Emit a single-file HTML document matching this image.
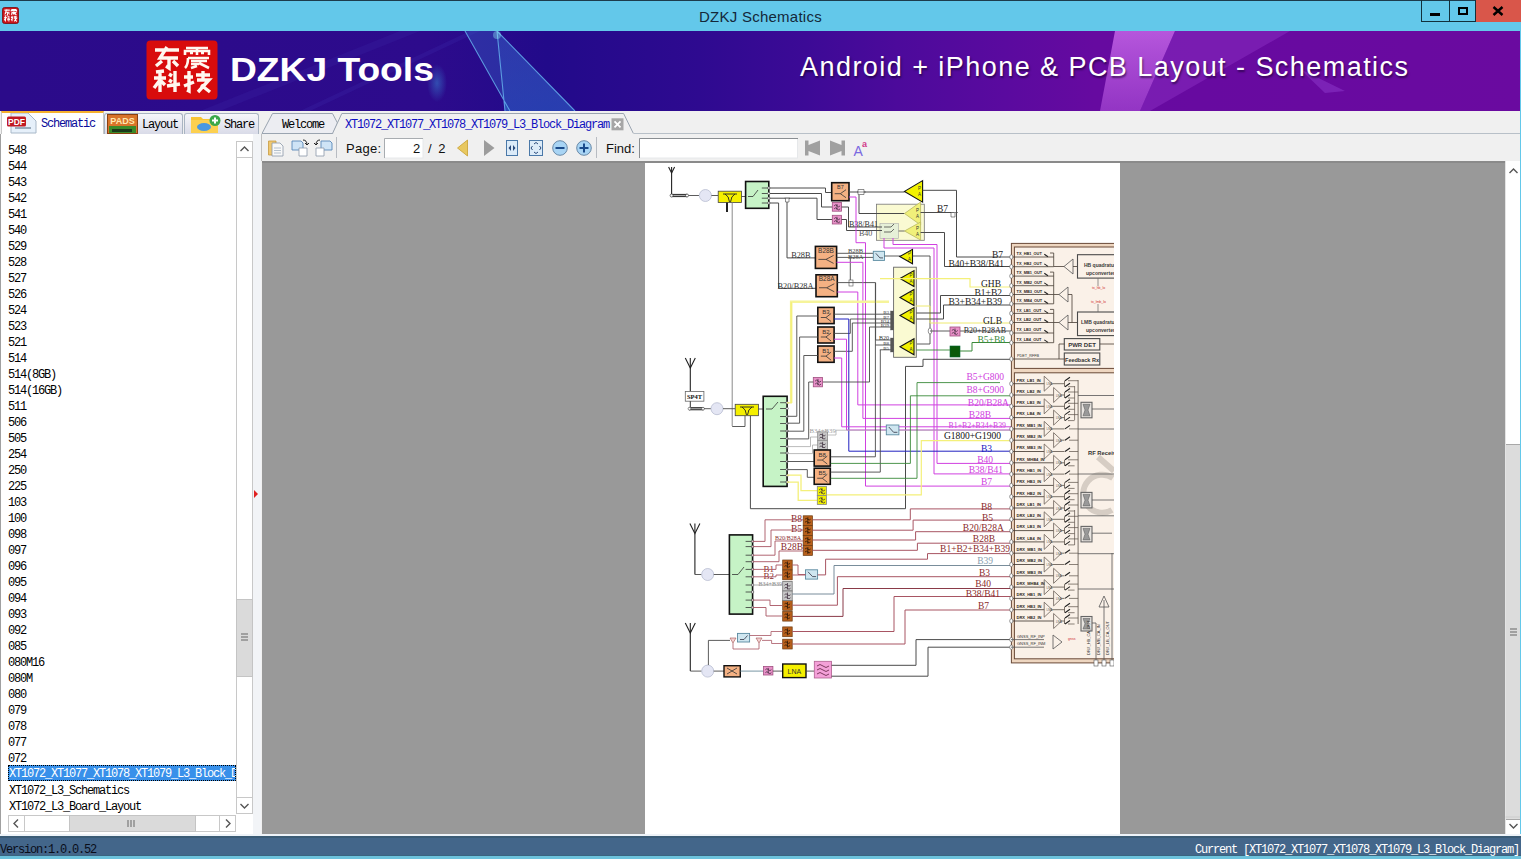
<!DOCTYPE html>
<html><head><meta charset="utf-8">
<style>
*{margin:0;padding:0;box-sizing:border-box}
html,body{width:1521px;height:859px;overflow:hidden;background:#f0f0f0;position:relative;font-family:"Liberation Sans",sans-serif}
.a{position:absolute}
.sm{font-family:"Liberation Mono",monospace;font-size:12px;letter-spacing:-1.2px;white-space:pre;line-height:16px}
#title{left:0;top:0;width:1521px;height:31px;background:#63c8ea;border-top:1px solid #1d3c4c}
#banner{left:0;top:31px;width:1520px;height:80px;background:linear-gradient(90deg,#2b0b8a 0%,#2d0b8c 28%,#220a8a 36%,#2e0a90 46%,#3c0a96 53%,#4c0a9b 59%,#5a0a9f 66%,#660aa0 72%,#6a0aa0 100%);overflow:hidden}
.li{left:8px;height:16px;color:#000}
.sel{left:8px;width:228px;height:16px;margin-top:-2px;padding-top:2px;padding-left:1px;line-height:14px;background:#3890ea;color:#fff;outline:1px dotted #000;outline-offset:-1px;overflow:hidden}
.tab{position:absolute;top:113px;height:21px;border:1px solid #a9b4c2;border-bottom:none;border-radius:3px 3px 0 0;background:linear-gradient(#f6f6fa,#d9dbe8)}
.sb{position:absolute;background:#fff;border:1px solid #c8c8c8}
</style></head><body>
<!-- title bar -->
<div id="title" class="a">
  <svg class="a" style="left:2px;top:6px" width="17" height="17" viewBox="0 0 17 17"><rect x="0.5" y="0.5" width="16" height="16" rx="2" fill="#c8141a" stroke="#7a0a0a" stroke-width="0.8"/><g transform="translate(0.5,0.5) scale(0.225,0.271) translate(-146.5,-9.5)" stroke="#fff" stroke-width="4.2" fill="none"><g transform="translate(154,16)"><path d="M1,3 H25 M13,0 L6,11 H24 M15,11 V21 L12,19 M8,14 L2,19 M19,14 L24,19"/></g><g transform="translate(184,16)"><path d="M2,1 H24 M1,8 V4 H25 V8 M13,1 V8 M4,11 H25 M4,11 Q4,18 1,21 M7,14 H23 M7,17 H15 M15,16 L25,21"/></g><g transform="translate(154,40)"><path d="M2,1 L10,0 M0,7 H12 M6,1 V21 M6,9 L0,17 M15,3 L18,5 M15,9 L18,11 M13,15 L26,13 M21,0 V21"/></g><g transform="translate(184,40)"><path d="M0,6 H9 M5,0 V20 M0,15 L10,11 M12,4 H26 M19,0 V9 M13,9 H25 L14,21 M17,14 L26,21"/></g></g></svg>
  <div class="a" style="left:699px;top:7px;font-size:15px;letter-spacing:0.25px;color:#14283a">DZKJ Schematics</div>
  <div class="a" style="left:1421px;top:-1px;width:29px;height:22px;border:1px solid #12303c;border-top:none"></div>
  <div class="a" style="left:1430px;top:12px;width:10px;height:3px;background:#000"></div>
  <div class="a" style="left:1449px;top:-1px;width:27px;height:22px;border:1px solid #12303c;border-top:none;border-left:none"></div>
  <div class="a" style="left:1458px;top:6px;width:10px;height:8px;border:2px solid #000"></div>
  <div class="a" style="left:1476px;top:-1px;width:45px;height:22px;background:#d9564a"></div>
  <svg class="a" style="left:1492px;top:5px" width="12" height="10" viewBox="0 0 12 10"><path d="M1.5,1 L10.5,9 M10.5,1 L1.5,9" stroke="#000" stroke-width="2.4"/></svg>
</div>
<!-- banner -->
<div id="banner" class="a">
  <svg class="a" style="left:0;top:0" width="1520" height="80" viewBox="0 0 1520 80">
    <defs>
      <linearGradient id="st1" x1="0" y1="0" x2="0" y2="1"><stop offset="0" stop-color="#3a78d8" stop-opacity=".55"/><stop offset="1" stop-color="#2c60c8" stop-opacity=".8"/></linearGradient>
      <linearGradient id="st2" x1="0" y1="0" x2="0" y2="1"><stop offset="0" stop-color="#d070f0" stop-opacity=".75"/><stop offset="1" stop-color="#c060e8" stop-opacity=".5"/></linearGradient>
      <radialGradient id="gl" cx=".5" cy=".5" r=".5"><stop offset="0" stop-color="#3aa0e0" stop-opacity=".8"/><stop offset="1" stop-color="#3aa0e0" stop-opacity="0"/></radialGradient>
    </defs>
    <path d="M200,80 L400,0 L420,0 L220,80Z" fill="#4030b0" opacity=".18"/>
    <path d="M300,80 L470,0 L480,0 L310,80Z" fill="#4a40c0" opacity=".15"/>
    <path d="M465,0 L497,0 L505,80 L510,80 Z" fill="#3a70d0" opacity=".35"/><path d="M497,0 L575,80 L505,80 Z" fill="url(#st1)" opacity=".75"/>
    <path d="M465,0 L510,80 M497,0 L575,80 M497,0 L505,80" stroke="#68b8f0" stroke-width="1.1" fill="none" opacity=".8"/>
    <circle cx="497" cy="4" r="4" fill="#9ff" opacity=".35"/>
    <ellipse cx="437" cy="52" rx="10" ry="19" fill="url(#gl)" opacity=".55"/>
    <path d="M1115,0 L1175,0 L1140,80 L1100,80 Z" fill="url(#st2)"/>
    <path d="M1175,0 L1290,0 L1150,80 L1140,80Z" fill="#9a40d0" opacity=".35"/>
    <path d="M1300,38 L1345,60 L1325,62 Z" fill="#a050e0" opacity=".35"/>
    <rect x="146.5" y="9.5" width="71" height="59" rx="4" fill="#d80c0c"/>
    <g stroke="#fff" stroke-width="3.1" fill="none" stroke-linecap="round" stroke-linejoin="round">
      <g transform="translate(154,47) translate(-146,-31)">
      </g>
    </g>
    <g stroke="#fff8f0" stroke-width="3.4" fill="none" stroke-linecap="butt" stroke-linejoin="miter">
      <g transform="translate(154,16)">
        <path d="M1,3 H25 M13,0 L6,11 H24 M15,11 V21 L12,19 M8,14 L2,19 M19,14 L24,19"/>
      </g>
      <g transform="translate(184,16)" stroke-width="2.6">
        <path d="M2,1 H24 M1,8 V4 H25 V8 M13,1 V8 M6,6 H9 M17,6 H20 M4,11 H25 M4,11 Q4,18 1,21 M7,14 H23 M7,17 H15 M15,16 L25,21 M7,21 L13,19"/>
      </g>
      <g transform="translate(154,40)">
        <path d="M2,1 L10,0 M0,7 H12 M6,1 V21 M6,9 L0,17 M7,10 L11,14 M15,3 L18,5 M15,9 L18,11 M13,15 L26,13 M21,0 V21"/>
      </g>
      <g transform="translate(184,40)">
        <path d="M0,6 H9 M5,0 V20 L3,19 M0,15 L10,11 M12,4 H26 M19,0 V9 M13,9 H25 L14,21 M17,14 L26,21"/>
      </g>
    </g>
  </svg>
  <div class="a" style="left:230px;top:20px;font-size:33.5px;letter-spacing:0px;font-weight:bold;color:#fff;transform:scaleX(1.11);transform-origin:0 0;white-space:nowrap">DZKJ Tools</div>
  <div class="a" style="left:800px;top:21px;font-size:27px;letter-spacing:1.45px;color:#fff;text-shadow:1px 2px 2px rgba(20,0,40,.6)">Android + iPhone &amp; PCB Layout - Schematics</div>
</div>
<!-- tab row -->
<div class="a" style="left:0;top:111px;width:1521px;height:23px;background:#f0f0f0"></div>
<div class="a" style="left:1px;top:111px;width:103px;height:23px;background:#fff;border-left:1px solid #c8c8c8;border-right:1px solid #c8c8c8;border-top:2px solid #f5b02e"></div>
<svg class="a" style="left:6px;top:113px" width="34" height="21" viewBox="0 0 34 21"><path d="M5,0 H22 L30,8 V20 H5Z" fill="#e6f0fa" stroke="#a8b8c8" stroke-width="1"/><rect x="9" y="14" width="16" height="2" fill="#9ab"/><rect x="1" y="3.5" width="19" height="10" rx="1.5" fill="#c01822"/><text x="10.5" y="12" font-family="Liberation Sans" font-size="8.5" font-weight="bold" fill="#fff" text-anchor="middle">PDF</text></svg>
<div class="a sm" style="left:41px;top:116px;color:#0a0a9a">Schematic</div>
<div class="tab" style="left:104px;width:79px"></div>
<svg class="a" style="left:107px;top:114px" width="31" height="20" viewBox="0 0 31 20"><rect x="0.5" y="0.5" width="30" height="19" fill="#d8742a" stroke="#8a4010"/><rect x="2" y="12" width="27" height="7" fill="#3a8a2a"/><rect x="5" y="15" width="20" height="3" fill="#1a3a1a"/><text x="15.5" y="10" font-family="Liberation Sans" font-size="9" font-weight="bold" fill="#ffe8b0" text-anchor="middle">PADS</text></svg>
<div class="a sm" style="left:142px;top:117px">Layout</div>
<div class="tab" style="left:184px;width:75px"></div>
<svg class="a" style="left:190px;top:114px" width="32" height="20" viewBox="0 0 32 20"><path d="M1,3 H11 L13,5 H28 V19 H1Z" fill="#f8c434"/><path d="M1,6 H28 V19 H1Z" fill="#fcd050"/><ellipse cx="14" cy="13" rx="7" ry="4" fill="#4a98e0"/><circle cx="25" cy="6.5" r="5.5" fill="#3aa84a"/><path d="M25,3.5 V9.5 M22,6.5 H28" stroke="#fff" stroke-width="2"/></svg>
<div class="a sm" style="left:224px;top:117px">Share</div>
<!-- left panel -->
<div class="a" style="left:0;top:134px;width:261px;height:700px;background:#fff;border-left:1px solid #a0a0a0"></div>
<div class="a" style="left:253px;top:134px;width:8px;height:700px;background:#f2f4f7"></div>
<svg class="a" style="left:253px;top:489px" width="6" height="10" viewBox="0 0 6 10"><path d="M1,1 L5,5 L1,9Z" fill="#e02020"/></svg>
<div class="sm" style="top:2px;position:absolute;left:0"><div class="a li" style="top:141px">548</div>
<div class="a li" style="top:157px">544</div>
<div class="a li" style="top:173px">543</div>
<div class="a li" style="top:189px">542</div>
<div class="a li" style="top:205px">541</div>
<div class="a li" style="top:221px">540</div>
<div class="a li" style="top:237px">529</div>
<div class="a li" style="top:253px">528</div>
<div class="a li" style="top:269px">527</div>
<div class="a li" style="top:285px">526</div>
<div class="a li" style="top:301px">524</div>
<div class="a li" style="top:317px">523</div>
<div class="a li" style="top:333px">521</div>
<div class="a li" style="top:349px">514</div>
<div class="a li" style="top:365px">514(8GB)</div>
<div class="a li" style="top:381px">514(16GB)</div>
<div class="a li" style="top:397px">511</div>
<div class="a li" style="top:413px">506</div>
<div class="a li" style="top:429px">505</div>
<div class="a li" style="top:445px">254</div>
<div class="a li" style="top:461px">250</div>
<div class="a li" style="top:477px">225</div>
<div class="a li" style="top:493px">103</div>
<div class="a li" style="top:509px">100</div>
<div class="a li" style="top:525px">098</div>
<div class="a li" style="top:541px">097</div>
<div class="a li" style="top:557px">096</div>
<div class="a li" style="top:573px">095</div>
<div class="a li" style="top:589px">094</div>
<div class="a li" style="top:605px">093</div>
<div class="a li" style="top:621px">092</div>
<div class="a li" style="top:637px">085</div>
<div class="a li" style="top:653px">080M16</div>
<div class="a li" style="top:669px">080M</div>
<div class="a li" style="top:685px">080</div>
<div class="a li" style="top:701px">079</div>
<div class="a li" style="top:717px">078</div>
<div class="a li" style="top:733px">077</div>
<div class="a li" style="top:749px">072</div>
<div class="a sel" style="top:765px">XT1072_XT1077_XT1078_XT1079_L3_Block_D</div>
<div class="a li" style="top:781px;left:9px">XT1072_L3_Schematics</div>
<div class="a li" style="top:797px;left:9px">XT1072_L3_Board_Layout</div></div>
<!-- vertical scrollbar list -->
<div class="sb" style="left:236px;top:141px;width:17px;height:673px;background:#fff"></div>
<div class="sb" style="left:236px;top:141px;width:17px;height:17px"></div>
<div class="sb" style="left:236px;top:797px;width:17px;height:17px"></div>
<div class="a" style="left:236px;top:599px;width:17px;height:78px;background:#dadada;border:1px solid #c4c4c4"></div>
<svg class="a" style="left:236px;top:141px" width="17" height="673" viewBox="0 0 17 673"><path d="M4.5,10 L8.5,6 L12.5,10" stroke="#555" stroke-width="1.4" fill="none"/><path d="M4.5,663 L8.5,667 L12.5,663" stroke="#555" stroke-width="1.4" fill="none"/><path d="M5,493 H12 M5,496 H12 M5,499 H12" stroke="#666" stroke-width="1"/></svg>
<!-- horizontal scrollbar list -->
<div class="sb" style="left:8px;top:815px;width:228px;height:17px"></div>
<div class="a" style="left:69px;top:815px;width:127px;height:17px;background:#dadada;border:1px solid #c4c4c4"></div>
<div class="sb" style="left:8px;top:815px;width:17px;height:17px"></div>
<div class="sb" style="left:219px;top:815px;width:17px;height:17px"></div>
<svg class="a" style="left:8px;top:815px" width="228" height="17" viewBox="0 0 228 17"><path d="M10,4.5 L6,8.5 L10,12.5" stroke="#555" stroke-width="1.4" fill="none"/><path d="M218,4.5 L222,8.5 L218,12.5" stroke="#555" stroke-width="1.4" fill="none"/><path d="M120,5 V12 M123,5 V12 M126,5 V12" stroke="#666" stroke-width="1"/></svg>
<!-- doc tabs -->
<svg class="a" style="left:255px;top:111px" width="400" height="24" viewBox="0 0 400 24">
  <path d="M7,22.5 L17.5,2.5 H77.5 L82.5,12 L78,22.5 Z" fill="#ecedf2" stroke="#9aa4b0" stroke-width="1"/>
  <path d="M77.5,22.5 L86.8,2.5 H368.6 L378.4,22.5" fill="#f0f0f0" stroke="#9aa4b0" stroke-width="1"/>
  <rect x="356.5" y="7.3" width="12" height="12" fill="#a6a6a6"/>
  <path d="M359.5,10.3 L365.5,16.3 M365.5,10.3 L359.5,16.3" stroke="#fff" stroke-width="1.8"/>
</svg>
<div class="a" style="left:634px;top:133px;width:887px;height:1px;background:#b8c0c8"></div>
<div class="a sm" style="left:282px;top:117px">Welcome</div>
<div class="a sm" style="left:345px;top:117px;color:#1010c0">XT1072_XT1077_XT1078_XT1079_L3_Block_Diagram</div>
<!-- toolbar -->
<div class="a" style="left:261px;top:134px;width:1260px;height:27px;background:#f0f0f0;border-left:1px solid #c0c0c0"></div>
<svg class="a" style="left:262px;top:134px" width="620" height="27" viewBox="262 134 620 27">
  <!-- folder-doc -->
  <path d="M268.5,141 H276 V155 H268.5Z" fill="#f0c870" stroke="#c89a40" stroke-width=".8"/>
  <path d="M272,143 H280 L283,146 V156 H272Z" fill="#f8f8f8" stroke="#8a98a8" stroke-width=".8"/>
  <path d="M274,148 H281 M274,150.5 H281 M274,153 H281" stroke="#9ab" stroke-width=".7"/>
  <!-- rotate 1 -->
  <path d="M292,141 H301 L303,143 V150 H292Z" fill="#cfe4f6" stroke="#5a88b8" stroke-width=".9"/>
  <path d="M299,148 H307 V156 H299Z" fill="#fff" stroke="#8a98a8" stroke-width=".8"/>
  <path d="M303,140 Q307,140 307,145 L305,143 M307,145 L309,143" stroke="#222" stroke-width="1" fill="none"/>
  <!-- rotate 2 -->
  <path d="M321,141 H330 L332,143 V150 H321Z" fill="#cfe4f6" stroke="#5a88b8" stroke-width=".9"/>
  <path d="M316,148 H324 V156 H316Z" fill="#fff" stroke="#8a98a8" stroke-width=".8"/>
  <path d="M320,140 Q316,140 316,145 L314,143 M316,145 L318,143" stroke="#222" stroke-width="1" fill="none"/>
  <path d="M336.5,137 V158" stroke="#b8bcc2" stroke-width="1"/>
  <!-- page input -->
  <rect x="384.5" y="138.5" width="38.5" height="19.5" fill="#fff" stroke="#e6e8ea"/>
  <path d="M384.5,158 V138.5 H423" stroke="#a8acb0" stroke-width="1" fill="none"/>
  <!-- back/forward -->
  <path d="M467.5,140 L457.5,148 L467.5,156 Z" fill="#e8c860" stroke="#c8a030" stroke-width=".8"/>
  <path d="M484,140 L494.5,148 L484,156 Z" fill="#9c9c9c"/>
  <!-- fit width -->
  <rect x="506.5" y="140.5" width="11" height="15" fill="#dcebf8" stroke="#4a78a8" stroke-width="1"/>
  <path d="M511,145 L508.5,148 L511,151Z M513,145 L515.5,148 L513,151Z" fill="#2a4a7a"/>
  <rect x="529.5" y="140.5" width="13" height="15" fill="#dcebf8" stroke="#4a78a8" stroke-width="1"/>
  <path d="M534,144 L536,142.5 L538,144 M534,152 L536,153.5 L538,152 M532.5,146 L531,148 L532.5,150 M539.5,146 L541,148 L539.5,150" stroke="#2a4a7a" stroke-width="1" fill="none"/>
  <circle cx="560" cy="148" r="7.3" fill="#a8d4f4" stroke="#6a8aa8" stroke-width="1"/>
  <path d="M555.5,148 H564.5" stroke="#1a4a8a" stroke-width="2"/>
  <circle cx="584" cy="148" r="7.3" fill="#a8d4f4" stroke="#6a8aa8" stroke-width="1"/>
  <path d="M579.5,148 H588.5 M584,143.5 V152.5" stroke="#1a4a8a" stroke-width="2"/>
  <path d="M596.5,137 V158" stroke="#b8bcc2" stroke-width="1"/>
  <!-- find input -->
  <rect x="639.5" y="138.5" width="158" height="19.5" fill="#fff" stroke="#e6e8ea"/>
  <path d="M639.5,158 V138.5 H798" stroke="#8a8e92" stroke-width="1" fill="none"/>
  <path d="M805,140.5 H808.5 V145 L820,140.5 V155.5 L808.5,151 V155.5 H805Z" fill="#a0a0a0"/>
  <path d="M845,140.5 H841.5 V145 L830,140.5 V155.5 L841.5,151 V155.5 H845Z" fill="#a0a0a0"/>
  <text x="853.5" y="156" font-family="Liberation Sans" font-size="14" fill="#7a6ae0">A</text>
  <text x="862" y="147" font-family="Liberation Sans" font-size="9" font-weight="bold" fill="#d03a8a">a</text>
</svg>
<div class="a" style="left:346px;top:141px;font-size:13px;letter-spacing:0.3px;color:#111">Page:</div>
<div class="a" style="left:413px;top:141px;font-size:13px;color:#111">2</div>
<div class="a" style="left:428px;top:141px;font-size:13px;letter-spacing:1.5px;color:#111">/ 2</div>
<div class="a" style="left:606px;top:141px;font-size:13px;letter-spacing:0px;color:#111">Find:</div>
<!-- view -->
<div class="a" style="left:262px;top:161px;width:1243px;height:673px;background:#999"></div>
<div class="a" style="left:262px;top:161px;width:1243px;height:2px;background:#8a8a8a"></div>
<div class="a" style="left:645px;top:163px;width:475px;height:671px;background:#fff"></div>
<svg class="a" style="left:0;top:0;overflow:hidden" width="1521" height="859" viewBox="0 0 1521 859"><defs><clipPath id="pg"><rect x="645" y="163" width="469" height="671"/></clipPath></defs><g clip-path="url(#pg)"><path d="M671.6,173 L671.6,195.5" fill="none" stroke="#222" stroke-width="1.1" opacity="1"/>
<path d="M668.6,167 L671.6,173 L674.6,167" fill="none" stroke="#222" stroke-width="1.1" opacity="1"/>
<path d="M671.6,167 L671.6,173" fill="none" stroke="#222" stroke-width="1.1" opacity="1"/>
<path d="M671.6,195.5 L687,195.5" fill="none" stroke="#333" stroke-width="3.2" opacity="1"/>
<path d="M673,195.5 L686,195.5" fill="none" stroke="#aaa" stroke-width="1.1" opacity="1"/>
<circle cx="671.6" cy="195.5" r="1.5" fill="#fff" stroke="#333" stroke-width="0.7"/>
<circle cx="687" cy="195.5" r="1.5" fill="#fff" stroke="#333" stroke-width="0.7"/>
<path d="M688.5,195.5 L699,195.5" fill="none" stroke="#4a4a4a" stroke-width="0.9" opacity="1"/>
<circle cx="705.4" cy="195.5" r="6" fill="#e4e6f4" stroke="#b8bcd0" stroke-width="0.8"/>
<path d="M711.4,195.5 L718,195.5" fill="none" stroke="#4a4a4a" stroke-width="0.9" opacity="1"/>
<rect x="718.2" y="191.2" width="23.299999999999955" height="11.300000000000011" fill="#f5f000" stroke="#444" stroke-width="0.8"/>
<path d="M723,194 L737,194 M725,194 Q729,196 729.5,202 M735,194 Q731,196 730.5,202" fill="none" stroke="#222" stroke-width="0.9"/>
<path d="M727,202.5 L727,212" fill="none" stroke="#222" stroke-width="2" opacity="1"/>
<path d="M732.2,202.5 L732.2,426" fill="none" stroke="#8a8a8a" stroke-width="1" opacity="1"/>
<path d="M741.5,196.5 L745.6,196.5" fill="none" stroke="#4a4a4a" stroke-width="0.9" opacity="1"/>
<rect x="745.6" y="181.5" width="23.199999999999932" height="26.80000000000001" fill="#c6f3c6" stroke="#111" stroke-width="1.6"/>
<path d="M761.8,188 L768.8,188" fill="none" stroke="#333" stroke-width="0.8" opacity="1"/>
<circle cx="768.8" cy="188" r="1.2" fill="#fff" stroke="#333" stroke-width="0.6"/>
<path d="M761.8,193.5 L768.8,193.5" fill="none" stroke="#333" stroke-width="0.8" opacity="1"/>
<circle cx="768.8" cy="193.5" r="1.2" fill="#fff" stroke="#333" stroke-width="0.6"/>
<path d="M761.8,198.2 L768.8,198.2" fill="none" stroke="#333" stroke-width="0.8" opacity="1"/>
<circle cx="768.8" cy="198.2" r="1.2" fill="#fff" stroke="#333" stroke-width="0.6"/>
<path d="M761.8,203 L768.8,203" fill="none" stroke="#333" stroke-width="0.8" opacity="1"/>
<circle cx="768.8" cy="203" r="1.2" fill="#fff" stroke="#333" stroke-width="0.6"/>
<path d="M748,196.5 L753,196.5 L758,190" fill="none" stroke="#333" stroke-width="0.8" opacity="1"/>
<path d="M770,188 L825.5,188 L825.5,192.5 L831.7,192.5" fill="none" stroke="#4a4a4a" stroke-width="1" opacity="1"/>
<path d="M770,193.5 L821.5,193.5 L821.5,207 L832.3,207" fill="none" stroke="#4a4a4a" stroke-width="1" opacity="1"/>
<path d="M770,198.2 L817,198.2 L817,219.5 L832.3,219.5" fill="none" stroke="#4a4a4a" stroke-width="1" opacity="1"/>
<path d="M770,203 L778.6,203 L778.6,288.3 L816,288.3" fill="none" stroke="#4a4a4a" stroke-width="1" opacity="1"/>
<path d="M787,198.2 L787,257.9 L815.4,257.9" fill="none" stroke="#4a4a4a" stroke-width="1" opacity="1"/>
<path d="M784.5,198.2 H790 M785.5,198.2 V202 H789 V198.2" fill="#fff" stroke="#444" stroke-width="0.6"/>
<text x="810.5" y="258" font-family="Liberation Serif" font-size="8.3" fill="#333" text-anchor="end" >B28B</text>
<text x="813.5" y="289" font-family="Liberation Serif" font-size="8.3" fill="#333" text-anchor="end" >B20/B28A</text>
<rect x="831.7" y="182.7" width="17.299999999999955" height="18.0" fill="#f4b183" stroke="#111" stroke-width="1.6"/>
<text x="840.35" y="189.2" font-family="Liberation Sans" font-size="5.5" fill="#333" text-anchor="middle" >B7</text>
<path d="M834.7,193.7 L840.35,193.7 L846,189.7" fill="none" stroke="#333" stroke-width="0.8" opacity="1"/>
<path d="M840.35,193.7 L846,197.7" fill="none" stroke="#333" stroke-width="0.8" opacity="1"/>
<rect x="832.3" y="202.5" width="9.300000000000068" height="8.699999999999989" fill="#e890c8" stroke="#a05080" stroke-width="0.8"/>
<path d="M834.0999999999999,205.85 q1.5,-2 3,0 t3,0 M834.0999999999999,208.85 q1.5,-2 3,0 t3,0 M836.95,204.0 V209.7" fill="none" stroke="#3a2a3a" stroke-width="0.75"/>
<rect x="832.3" y="215.3" width="9.300000000000068" height="8.699999999999989" fill="#e890c8" stroke="#a05080" stroke-width="0.8"/>
<path d="M834.0999999999999,218.65 q1.5,-2 3,0 t3,0 M834.0999999999999,221.65 q1.5,-2 3,0 t3,0 M836.95,216.8 V222.5" fill="none" stroke="#3a2a3a" stroke-width="0.75"/>
<rect x="876.5" y="204.2" width="47.799999999999955" height="36.10000000000002" fill="#fafad2" stroke="#777" stroke-width="0.8"/>
<rect x="880" y="223.5" width="18.600000000000023" height="15.099999999999994" fill="#e6f0d8" stroke="#aaa" stroke-width="0.6"/>
<path d="M849,192 L904.5,192" fill="none" stroke="#4a4a4a" stroke-width="1" opacity="1"/>
<path d="M857,192 H866 M858,189.5 H864 V194.5 H858 Z" fill="#fff" stroke="#444" stroke-width="0.6"/>
<path d="M859,195 L859,213.5 L904.5,213.5" fill="none" stroke="#4a4a4a" stroke-width="1" opacity="1"/>
<path d="M841.6,207 L848.5,207 L848.5,227 L882,227" fill="none" stroke="#4a4a4a" stroke-width="1" opacity="1"/>
<path d="M841.6,219.5 L846.5,219.5 L846.5,230.5 L882,230.5" fill="none" stroke="#4a4a4a" stroke-width="1" opacity="1"/>
<text x="849" y="227" font-family="Liberation Serif" font-size="8" fill="#333" text-anchor="start" >B38/B41</text>
<text x="859" y="236" font-family="Liberation Serif" font-size="8" fill="#555" text-anchor="start" >B40</text>
<path d="M884,227 L891,227 L894,224" fill="none" stroke="#333" stroke-width="0.7" opacity="1"/>
<path d="M884,232 L891,232 L894,229" fill="none" stroke="#333" stroke-width="0.7" opacity="1"/>
<path d="M904.5,191.4 L922.6,180.65 L922.6,202.15 Z" fill="#f2f200" stroke="#111" stroke-width="1.1" opacity="1"/>
<text x="919.6" y="189.9" font-family="Liberation Sans" font-size="4.5" fill="#333" text-anchor="middle" >P</text>
<text x="919.6" y="195.9" font-family="Liberation Sans" font-size="4.5" fill="#333" text-anchor="middle" >A</text>
<path d="M904.5,213.5 L920.6,202.0 L920.6,225.0 Z" fill="#f0f07a" stroke="#b8b860" stroke-width="0.8" opacity="1"/>
<text x="917.6" y="212.0" font-family="Liberation Sans" font-size="4.5" fill="#333" text-anchor="middle" >P</text>
<text x="917.6" y="218.0" font-family="Liberation Sans" font-size="4.5" fill="#333" text-anchor="middle" >A</text>
<path d="M904.5,231 L920.6,222.0 L920.6,240.0 Z" fill="#f0f07a" stroke="#b8b860" stroke-width="0.8" opacity="1"/>
<text x="917.6" y="229.5" font-family="Liberation Sans" font-size="4.5" fill="#333" text-anchor="middle" >P</text>
<text x="917.6" y="235.5" font-family="Liberation Sans" font-size="4.5" fill="#333" text-anchor="middle" >A</text>
<path d="M898.6,231 L904.5,231" fill="none" stroke="#4a4a4a" stroke-width="0.8" opacity="1"/>
<path d="M922.6,190.3 L956.5,190.3 L956.5,257 L1011,257" fill="none" stroke="#4a4a4a" stroke-width="1" opacity="1"/>
<path d="M920.6,212.5 L954,212.5" fill="none" stroke="#4a4a4a" stroke-width="1" opacity="1"/>
<path d="M950,212.5 H958 M951,212.5 V217 H955 V212.5" fill="#fff" stroke="#444" stroke-width="0.6"/>
<text x="948" y="212" font-family="Liberation Serif" font-size="9.5" fill="#222" text-anchor="end" >B7</text>
<path d="M920.6,232.5 L944.5,232.5 L944.5,266.5 L1011,266.5" fill="none" stroke="#4a4a4a" stroke-width="1" opacity="1"/>
<text x="1003" y="258" font-family="Liberation Serif" font-size="9.5" fill="#222" text-anchor="end" >B7</text>
<text x="1004" y="267" font-family="Liberation Serif" font-size="9.5" fill="#222" text-anchor="end" >B40+B38/B41</text>
<path d="M849,197 L856,197 L856,242.7 L865.5,242.7 L865.5,486.1 L1011,486.1" fill="none" stroke="#d040e0" stroke-width="1" opacity="1"/>
<path d="M893,238 L893,244.5 L937,244.5 L937,463.4 L1011,463.4" fill="none" stroke="#d040e0" stroke-width="1" opacity="1"/>
<path d="M884,238 L884,248 L934,248 L934,473.9 L1011,473.9" fill="none" stroke="#d040e0" stroke-width="1" opacity="1"/>
<rect x="815.4" y="246.4" width="21.200000000000045" height="21.99999999999997" fill="#f4b183" stroke="#111" stroke-width="1.6"/>
<text x="826.0" y="252.9" font-family="Liberation Sans" font-size="6.5" fill="#333" text-anchor="middle" >B28B</text>
<path d="M818.4,259.4 L826.0,259.4 L833.6,255.39999999999998" fill="none" stroke="#333" stroke-width="0.8" opacity="1"/>
<path d="M826.0,259.4 L833.6,263.4" fill="none" stroke="#333" stroke-width="0.8" opacity="1"/>
<rect x="816" y="274.8" width="21.299999999999955" height="21.899999999999977" fill="#f4b183" stroke="#111" stroke-width="1.6"/>
<text x="826.65" y="281.3" font-family="Liberation Sans" font-size="6.5" fill="#333" text-anchor="middle" >B28A</text>
<path d="M819,287.75 L826.65,287.75 L834.3,283.75" fill="none" stroke="#333" stroke-width="0.8" opacity="1"/>
<path d="M826.65,287.75 L834.3,291.75" fill="none" stroke="#333" stroke-width="0.8" opacity="1"/>
<path d="M836.6,253.3 L873.3,253.3" fill="none" stroke="#4a4a4a" stroke-width="0.9" opacity="1"/>
<path d="M836.6,257.4 L873.3,257.4" fill="none" stroke="#4a4a4a" stroke-width="0.9" opacity="1"/>
<text x="848" y="252.5" font-family="Liberation Serif" font-size="6.5" fill="#444" text-anchor="start" >B28B</text>
<text x="848" y="258.5" font-family="Liberation Serif" font-size="6.5" fill="#444" text-anchor="start" >B28A</text>
<rect x="873.3" y="251.3" width="11.200000000000045" height="9.099999999999966" fill="#cfe6f0" stroke="#5a8aa0" stroke-width="0.9"/>
<path d="M875.8,253.3 L879.9,257.9 L883.0,257.9" fill="none" stroke="#334" stroke-width="0.8"/>
<path d="M884.5,256 L900,256" fill="none" stroke="#4a4a4a" stroke-width="0.9" opacity="1"/>
<path d="M850.3,257.4 L850.3,283" fill="none" stroke="#4a4a4a" stroke-width="0.9" opacity="1"/>
<rect x="849" y="280" width="4" height="6" fill="#fff" stroke="#555" stroke-width="0.6"/>
<path d="M837.3,282.6 L875.6,282.6 L875.6,340 L893.4,340" fill="none" stroke="#4a4a4a" stroke-width="0.9" opacity="1"/>
<path d="M836.6,262.3 L862.9,262.3 L862.9,418.4 L1011,418.4" fill="none" stroke="#d040e0" stroke-width="1" opacity="1"/>
<path d="M837.3,292 L857.8,292 L857.8,404.9 L1011,404.9" fill="none" stroke="#d040e0" stroke-width="1" opacity="1"/>
<path d="M899.7,256.6 L912.5,249.35000000000002 L912.5,263.85 Z" fill="#f2f200" stroke="#111" stroke-width="1.1" opacity="1"/>
<text x="909.5" y="255.10000000000002" font-family="Liberation Sans" font-size="4.5" fill="#333" text-anchor="middle" >P</text>
<text x="909.5" y="261.1" font-family="Liberation Sans" font-size="4.5" fill="#333" text-anchor="middle" >A</text>
<path d="M912.5,256 L930,256 L930,344 L916.9,344" fill="none" stroke="#4a4a4a" stroke-width="0.9" opacity="1"/>
<ellipse cx="930" cy="331" rx="1.8" ry="3" fill="#fff" stroke="#555" stroke-width="0.6"/>
<rect x="893.6" y="267.2" width="22.699999999999932" height="90.10000000000002" fill="#fafad2" stroke="#666" stroke-width="0.9"/>
<path d="M900,278.6 L914,270.6 L914,286.6 Z" fill="#f2f200" stroke="#111" stroke-width="1.1" opacity="1"/>
<text x="911" y="277.1" font-family="Liberation Sans" font-size="4.5" fill="#333" text-anchor="middle" >P</text>
<text x="911" y="283.1" font-family="Liberation Sans" font-size="4.5" fill="#333" text-anchor="middle" >A</text>
<path d="M900,297.5 L914,289.5 L914,305.5 Z" fill="#f2f200" stroke="#111" stroke-width="1.1" opacity="1"/>
<text x="911" y="296.0" font-family="Liberation Sans" font-size="4.5" fill="#333" text-anchor="middle" >P</text>
<text x="911" y="302.0" font-family="Liberation Sans" font-size="4.5" fill="#333" text-anchor="middle" >A</text>
<path d="M900,315.6 L914,307.6 L914,323.6 Z" fill="#f2f200" stroke="#111" stroke-width="1.1" opacity="1"/>
<text x="911" y="314.1" font-family="Liberation Sans" font-size="4.5" fill="#333" text-anchor="middle" >P</text>
<text x="911" y="320.1" font-family="Liberation Sans" font-size="4.5" fill="#333" text-anchor="middle" >A</text>
<path d="M900,346.7 L914,338.7 L914,354.7 Z" fill="#f2f200" stroke="#111" stroke-width="1.1" opacity="1"/>
<text x="911" y="345.2" font-family="Liberation Sans" font-size="4.5" fill="#333" text-anchor="middle" >P</text>
<text x="911" y="351.2" font-family="Liberation Sans" font-size="4.5" fill="#333" text-anchor="middle" >A</text>
<path d="M791.2,403 L791.2,301.8 L889,301.8" fill="none" stroke="#f6f49a" stroke-width="2.6" opacity="1"/>
<path d="M880,278.6 L970,278.6 L970,287 L1011,287" fill="none" stroke="#f4f07a" stroke-width="1.2" opacity="1"/>
<path d="M916,306 L930,306 L930,323 L1011,323" fill="none" stroke="#eeea70" stroke-width="1" opacity="1"/>
<text x="1001" y="287" font-family="Liberation Serif" font-size="9.5" fill="#222" text-anchor="end" >GHB</text>
<text x="1002" y="296" font-family="Liberation Serif" font-size="9.5" fill="#222" text-anchor="end" >B1+B2</text>
<text x="1002" y="305" font-family="Liberation Serif" font-size="9.5" fill="#222" text-anchor="end" >B3+B34+B39</text>
<text x="1002" y="324" font-family="Liberation Serif" font-size="9.5" fill="#222" text-anchor="end" >GLB</text>
<text x="1006" y="333" font-family="Liberation Serif" font-size="8" fill="#222" text-anchor="end" >B20+B28AB</text>
<text x="1005" y="343" font-family="Liberation Serif" font-size="9.5" fill="#3a8a3a" text-anchor="end" >B5+B8</text>
<path d="M916.3,313 L940.5,313 L940.5,295.5 L1011,295.5" fill="none" stroke="#4a4a4a" stroke-width="1" opacity="1"/>
<path d="M916.3,319 L943.5,319 L943.5,305 L1011,305" fill="none" stroke="#4a4a4a" stroke-width="1" opacity="1"/>
<path d="M930,331 L1011,331" fill="none" stroke="#4a4a4a" stroke-width="0.9" opacity="1"/>
<rect x="950" y="327" width="10" height="9" fill="#e890c8" stroke="#a05080" stroke-width="0.8"/>
<path d="M951.8,330.5 q1.5,-2 3,0 t3,0 M951.8,333.5 q1.5,-2 3,0 t3,0 M955.0,328.5 V334.5" fill="none" stroke="#3a2a3a" stroke-width="0.75"/>
<rect x="950" y="346" width="10" height="11" fill="#0a5a0a" stroke="#063" stroke-width="0.6"/>
<path d="M916.3,350 L950,350" fill="none" stroke="#3a8a3a" stroke-width="0.9" opacity="1"/>
<path d="M960,351 L972,351 L972,342.5 L1011,342.5" fill="none" stroke="#3a8a3a" stroke-width="1" opacity="1"/>
<path d="M923,359.3 L1011,359.3" fill="none" stroke="#4a4a4a" stroke-width="1" opacity="1"/>
<path d="M923,359.3 L923,366.4 L905.5,366.4 L905.5,508.7 L750.4,508.7 L750.4,415.7" fill="none" stroke="#4a4a4a" stroke-width="1" opacity="1"/>
<rect x="817.8" y="307.4" width="16.300000000000068" height="16.200000000000045" fill="#f4b183" stroke="#111" stroke-width="1.6"/>
<text x="825.95" y="313.9" font-family="Liberation Sans" font-size="6" fill="#333" text-anchor="middle" >B3</text>
<path d="M820.8,317.5 L825.95,317.5 L831.1,313.5" fill="none" stroke="#333" stroke-width="0.8" opacity="1"/>
<path d="M825.95,317.5 L831.1,321.5" fill="none" stroke="#333" stroke-width="0.8" opacity="1"/>
<rect x="817.8" y="327" width="16.300000000000068" height="16" fill="#f4b183" stroke="#111" stroke-width="1.6"/>
<text x="825.95" y="333.5" font-family="Liberation Sans" font-size="6" fill="#333" text-anchor="middle" >B2</text>
<path d="M820.8,337.0 L825.95,337.0 L831.1,333.0" fill="none" stroke="#333" stroke-width="0.8" opacity="1"/>
<path d="M825.95,337.0 L831.1,341.0" fill="none" stroke="#333" stroke-width="0.8" opacity="1"/>
<rect x="817.8" y="346" width="16.300000000000068" height="16.30000000000001" fill="#f4b183" stroke="#111" stroke-width="1.6"/>
<text x="825.95" y="352.5" font-family="Liberation Sans" font-size="6" fill="#333" text-anchor="middle" >B1</text>
<path d="M820.8,356.15 L825.95,356.15 L831.1,352.15" fill="none" stroke="#333" stroke-width="0.8" opacity="1"/>
<path d="M825.95,356.15 L831.1,360.15" fill="none" stroke="#333" stroke-width="0.8" opacity="1"/>
<path d="M796.8,416.3 L796.8,316 L817.8,316" fill="none" stroke="#4a4a4a" stroke-width="0.9" opacity="1"/>
<path d="M799.6,423.2 L799.6,337 L817.8,337" fill="none" stroke="#4a4a4a" stroke-width="0.9" opacity="1"/>
<path d="M803.8,431.2 L803.8,355.5 L817.8,355.5" fill="none" stroke="#4a4a4a" stroke-width="0.9" opacity="1"/>
<path d="M834.1,314.2 L893.4,314.2" fill="none" stroke="#4a4a4a" stroke-width="0.9" opacity="1"/>
<path d="M834.1,333.4 L850.3,333.4 L850.3,319 L893.4,319" fill="none" stroke="#4a4a4a" stroke-width="0.9" opacity="1"/>
<path d="M834.1,351.3 L852.3,351.3 L852.3,323 L893.4,323" fill="none" stroke="#4a4a4a" stroke-width="0.9" opacity="1"/>
<path d="M834.1,319 L848.8,319 L848.8,451.2 L1011,451.2" fill="none" stroke="#2020c0" stroke-width="1" opacity="1"/>
<path d="M834.1,339.2 L846.5,339.2 L846.5,430 L1011,430" fill="none" stroke="#d040e0" stroke-width="1" opacity="1"/>
<path d="M834.1,358 L841.7,358 L841.7,426.8 L1011,426.8" fill="none" stroke="#d040e0" stroke-width="1" opacity="1"/>
<path d="M869.5,327 L893.4,327" fill="none" stroke="#4a4a4a" stroke-width="0.9" opacity="1"/>
<path d="M822.6,382 L869.5,382 L869.5,327" fill="none" stroke="#4a4a4a" stroke-width="0.9" opacity="1"/>
<path d="M879.8,349.8 L893.4,349.8" fill="none" stroke="#4a4a4a" stroke-width="0.9" opacity="1"/>
<path d="M875.3,345 L893.4,345" fill="none" stroke="#4a4a4a" stroke-width="0.9" opacity="1"/>
<rect x="890.5" y="311" width="3.1000000000000227" height="19" fill="#555" stroke="#555" stroke-width="0.3"/>
<rect x="890.5" y="338" width="3.1000000000000227" height="14" fill="#555" stroke="#555" stroke-width="0.3"/>
<text x="889" y="313.5" font-family="Liberation Serif" font-size="5" fill="#333" text-anchor="end" >B3</text>
<text x="889" y="318.5" font-family="Liberation Serif" font-size="5" fill="#333" text-anchor="end" >B7</text>
<text x="889" y="322.5" font-family="Liberation Serif" font-size="5" fill="#333" text-anchor="end" >B34</text>
<text x="889" y="327" font-family="Liberation Serif" font-size="5" fill="#333" text-anchor="end" >B39</text>
<text x="889" y="340" font-family="Liberation Serif" font-size="6" fill="#333" text-anchor="end" >B20</text>
<text x="889" y="345" font-family="Liberation Serif" font-size="5" fill="#333" text-anchor="end" >B8</text>
<text x="889" y="350" font-family="Liberation Serif" font-size="5" fill="#333" text-anchor="end" >B5</text>
<rect x="813.3" y="377.4" width="9.300000000000068" height="9.400000000000034" fill="#e890c8" stroke="#a05080" stroke-width="0.8"/>
<path d="M815.0999999999999,381.1 q1.5,-2 3,0 t3,0 M815.0999999999999,384.1 q1.5,-2 3,0 t3,0 M817.95,378.9 V385.3" fill="none" stroke="#3a2a3a" stroke-width="0.75"/>
<path d="M690.3,368 L690.3,391.5" fill="none" stroke="#222" stroke-width="1.1" opacity="1"/>
<path d="M685.3,358 L690.3,368 L695.3,358" fill="none" stroke="#222" stroke-width="1.1" opacity="1"/>
<path d="M690.3,358 L690.3,368" fill="none" stroke="#222" stroke-width="1.1" opacity="1"/>
<rect x="685.3" y="391.5" width="18.600000000000023" height="9.699999999999989" fill="#fff" stroke="#666" stroke-width="0.8"/>
<text x="694.6" y="399" font-family="Liberation Serif" font-size="6.5" fill="#111" text-anchor="middle" font-weight="bold">SP4T</text>
<path d="M690.3,401.2 L690.3,408.7" fill="none" stroke="#333" stroke-width="1" opacity="1"/>
<path d="M689,408.7 L703.5,408.7" fill="none" stroke="#333" stroke-width="3.2" opacity="1"/>
<path d="M690.5,408.7 L702,408.7" fill="none" stroke="#aaa" stroke-width="1.1" opacity="1"/>
<circle cx="689.5" cy="408.7" r="1.4" fill="#fff" stroke="#444" stroke-width="0.6"/>
<circle cx="703" cy="408.7" r="1.4" fill="#fff" stroke="#444" stroke-width="0.6"/>
<path d="M704,408.7 L711,408.7" fill="none" stroke="#4a4a4a" stroke-width="0.9" opacity="1"/>
<circle cx="717" cy="408.7" r="6" fill="#e4e6f4" stroke="#b8bcd0" stroke-width="0.8"/>
<path d="M723,408.7 L735.2,408.7" fill="none" stroke="#4a4a4a" stroke-width="0.9" opacity="1"/>
<rect x="735.2" y="404.3" width="23.199999999999932" height="11.399999999999977" fill="#f5f000" stroke="#444" stroke-width="0.8"/>
<path d="M740,407 L754,407 M742,407 Q746,409 746.5,415 M752,407 Q748,409 747.5,415" fill="none" stroke="#222" stroke-width="0.9"/>
<path d="M732.2,426.5 L745,426.5 L745,415.7" fill="none" stroke="#4a4a4a" stroke-width="0.9" opacity="1"/>
<path d="M758.4,409 L763.2,409" fill="none" stroke="#4a4a4a" stroke-width="0.9" opacity="1"/>
<rect x="763.2" y="396.3" width="23.899999999999977" height="90.09999999999997" fill="#c6f3c6" stroke="#111" stroke-width="1.6"/>
<path d="M780.1,402.7 L787.1,402.7" fill="none" stroke="#333" stroke-width="0.8" opacity="1"/>
<circle cx="787.1" cy="402.7" r="1.2" fill="#fff" stroke="#333" stroke-width="0.6"/>
<path d="M780.1,408.5 L787.1,408.5" fill="none" stroke="#333" stroke-width="0.8" opacity="1"/>
<circle cx="787.1" cy="408.5" r="1.2" fill="#fff" stroke="#333" stroke-width="0.6"/>
<path d="M780.1,416.5 L787.1,416.5" fill="none" stroke="#333" stroke-width="0.8" opacity="1"/>
<circle cx="787.1" cy="416.5" r="1.2" fill="#fff" stroke="#333" stroke-width="0.6"/>
<path d="M780.1,423.5 L787.1,423.5" fill="none" stroke="#333" stroke-width="0.8" opacity="1"/>
<circle cx="787.1" cy="423.5" r="1.2" fill="#fff" stroke="#333" stroke-width="0.6"/>
<path d="M780.1,431 L787.1,431" fill="none" stroke="#333" stroke-width="0.8" opacity="1"/>
<circle cx="787.1" cy="431" r="1.2" fill="#fff" stroke="#333" stroke-width="0.6"/>
<path d="M780.1,438.5 L787.1,438.5" fill="none" stroke="#333" stroke-width="0.8" opacity="1"/>
<circle cx="787.1" cy="438.5" r="1.2" fill="#fff" stroke="#333" stroke-width="0.6"/>
<path d="M780.1,446.5 L787.1,446.5" fill="none" stroke="#333" stroke-width="0.8" opacity="1"/>
<circle cx="787.1" cy="446.5" r="1.2" fill="#fff" stroke="#333" stroke-width="0.6"/>
<path d="M780.1,453 L787.1,453" fill="none" stroke="#333" stroke-width="0.8" opacity="1"/>
<circle cx="787.1" cy="453" r="1.2" fill="#fff" stroke="#333" stroke-width="0.6"/>
<path d="M780.1,461.5 L787.1,461.5" fill="none" stroke="#333" stroke-width="0.8" opacity="1"/>
<circle cx="787.1" cy="461.5" r="1.2" fill="#fff" stroke="#333" stroke-width="0.6"/>
<path d="M780.1,469.5 L787.1,469.5" fill="none" stroke="#333" stroke-width="0.8" opacity="1"/>
<circle cx="787.1" cy="469.5" r="1.2" fill="#fff" stroke="#333" stroke-width="0.6"/>
<path d="M780.1,475.5 L787.1,475.5" fill="none" stroke="#333" stroke-width="0.8" opacity="1"/>
<circle cx="787.1" cy="475.5" r="1.2" fill="#fff" stroke="#333" stroke-width="0.6"/>
<path d="M780.1,482 L787.1,482" fill="none" stroke="#333" stroke-width="0.8" opacity="1"/>
<circle cx="787.1" cy="482" r="1.2" fill="#fff" stroke="#333" stroke-width="0.6"/>
<path d="M766,409 L772,409 L778,402" fill="none" stroke="#333" stroke-width="0.8" opacity="1"/>
<path d="M787,402.9 L791.2,402.9 L791.2,302" fill="none" stroke="#f4f07a" stroke-width="1.4" opacity="1"/>
<path d="M787,416.3 L796.8,416.3" fill="none" stroke="#4a4a4a" stroke-width="0.9" opacity="1"/>
<path d="M787,423.2 L799.6,423.2" fill="none" stroke="#4a4a4a" stroke-width="0.9" opacity="1"/>
<path d="M787,431.2 L803.8,431.2" fill="none" stroke="#4a4a4a" stroke-width="0.9" opacity="1"/>
<path d="M787,438.9 L808.7,438.9 L808.7,382 L813.3,382" fill="none" stroke="#4a4a4a" stroke-width="0.9" opacity="1"/>
<path d="M787,446.6 L810.5,446.6 L810.5,437 L817.7,437" fill="none" stroke="#a8a8a8" stroke-width="0.8" opacity="1"/>
<path d="M787,453.6 L812.5,453.6 L812.5,445 L817.7,445" fill="none" stroke="#a8a8a8" stroke-width="0.8" opacity="1"/>
<path d="M787,461.5 L814.2,461.5" fill="none" stroke="#4a4a4a" stroke-width="0.9" opacity="1"/>
<path d="M787,469.6 L807.3,469.6 L807.3,477.3 L814.2,477.3" fill="none" stroke="#4a4a4a" stroke-width="0.9" opacity="1"/>
<path d="M787,475.2 L801,475.2 L801,490.6 L817.3,490.6" fill="none" stroke="#f4f07a" stroke-width="1.3" opacity="1"/>
<path d="M787,482.2 L798.2,482.2 L798.2,500.3 L817.3,500.3" fill="none" stroke="#f4f07a" stroke-width="1.3" opacity="1"/>
<text x="809.4" y="432.5" font-family="Liberation Serif" font-size="6.8" fill="#a0a0a0" text-anchor="start" >B34+B39</text>
<rect x="817.7" y="431.9" width="9.799999999999955" height="8.400000000000034" fill="#c8c8c8" stroke="#888" stroke-width="0.8"/>
<path d="M819.5,435.1 q1.5,-2 3,0 t3,0 M819.5,438.1 q1.5,-2 3,0 t3,0 M822.6,433.4 V438.8" fill="none" stroke="#3a2a3a" stroke-width="0.75"/>
<rect x="817.7" y="440.3" width="9.799999999999955" height="9.099999999999966" fill="#c8c8c8" stroke="#888" stroke-width="0.8"/>
<path d="M819.5,443.85 q1.5,-2 3,0 t3,0 M819.5,446.85 q1.5,-2 3,0 t3,0 M822.6,441.8 V447.9" fill="none" stroke="#3a2a3a" stroke-width="0.75"/>
<path d="M827.5,435 L836,435 L836,430.2 L1011,430.2" fill="none" stroke="#b0b0b0" stroke-width="0.8" opacity="1"/>
<rect x="814.2" y="450" width="16.09999999999991" height="16.100000000000023" fill="#f4b183" stroke="#111" stroke-width="1.6"/>
<text x="822.25" y="456.5" font-family="Liberation Sans" font-size="6" fill="#333" text-anchor="middle" >B8</text>
<path d="M817.2,460.05 L822.25,460.05 L827.3,456.05" fill="none" stroke="#333" stroke-width="0.8" opacity="1"/>
<path d="M822.25,460.05 L827.3,464.05" fill="none" stroke="#333" stroke-width="0.8" opacity="1"/>
<rect x="814.2" y="468.2" width="16.09999999999991" height="16.100000000000023" fill="#f4b183" stroke="#111" stroke-width="1.6"/>
<text x="822.25" y="474.7" font-family="Liberation Sans" font-size="6" fill="#333" text-anchor="middle" >B5</text>
<path d="M817.2,478.25 L822.25,478.25 L827.3,474.25" fill="none" stroke="#333" stroke-width="0.8" opacity="1"/>
<path d="M822.25,478.25 L827.3,482.25" fill="none" stroke="#333" stroke-width="0.8" opacity="1"/>
<rect x="817.3" y="486.4" width="9.200000000000045" height="9.0" fill="#f0f000" stroke="#888" stroke-width="0.8"/>
<path d="M819.0999999999999,489.9 q1.5,-2 3,0 t3,0 M819.0999999999999,492.9 q1.5,-2 3,0 t3,0 M821.9,487.9 V493.9" fill="none" stroke="#3a2a3a" stroke-width="0.75"/>
<rect x="817.3" y="495.4" width="9.200000000000045" height="9.100000000000023" fill="#f0f000" stroke="#888" stroke-width="0.8"/>
<path d="M819.0999999999999,498.95 q1.5,-2 3,0 t3,0 M819.0999999999999,501.95 q1.5,-2 3,0 t3,0 M821.9,496.9 V503.0" fill="none" stroke="#3a2a3a" stroke-width="0.75"/>
<path d="M830.7,456.8 L875.4,456.8 L875.4,283" fill="none" stroke="#4a4a4a" stroke-width="0.9" opacity="1"/>
<path d="M830.7,472.1 L880.3,472.1 L880.3,350" fill="none" stroke="#4a4a4a" stroke-width="0.9" opacity="1"/>
<path d="M830.7,463.4 L910.4,463.4 L910.4,395.8 L1011,395.8" fill="none" stroke="#3a8a3a" stroke-width="0.9" opacity="1"/>
<path d="M830.7,478.3 L917,478.3 L917,382.6 L1000,382.6" fill="none" stroke="#3a8a3a" stroke-width="0.9" opacity="1"/>
<path d="M826.9,494.8 L921.3,494.8 L921.3,440.7 L1011,440.7" fill="none" stroke="#f4f07a" stroke-width="1.2" opacity="1"/>
<rect x="886.3" y="425" width="12.600000000000023" height="9.800000000000011" fill="#cfe6f0" stroke="#5a8aa0" stroke-width="0.9"/>
<path d="M888.8,427 L893.5999999999999,432.3 L897.4,432.3" fill="none" stroke="#334" stroke-width="0.8"/>
<text x="1004" y="380" font-family="Liberation Serif" font-size="9.5" fill="#d040e0" text-anchor="end" >B5+G800</text>
<text x="1004" y="393" font-family="Liberation Serif" font-size="9.5" fill="#d040e0" text-anchor="end" >B8+G900</text>
<text x="1009" y="406" font-family="Liberation Serif" font-size="9.5" fill="#d040e0" text-anchor="end" >B20/B28A</text>
<text x="991" y="418" font-family="Liberation Serif" font-size="9.5" fill="#d040e0" text-anchor="end" >B28B</text>
<text x="1006" y="428" font-family="Liberation Serif" font-size="7.8" fill="#d040e0" text-anchor="end" >B1+B2+B34+B39</text>
<text x="1001" y="439" font-family="Liberation Serif" font-size="9.5" fill="#111" text-anchor="end" >G1800+G1900</text>
<text x="992" y="452" font-family="Liberation Serif" font-size="9.5" fill="#2020c0" text-anchor="end" >B3</text>
<text x="993" y="463" font-family="Liberation Serif" font-size="9.5" fill="#d040e0" text-anchor="end" >B40</text>
<text x="1003" y="473" font-family="Liberation Serif" font-size="9.5" fill="#d040e0" text-anchor="end" >B38/B41</text>
<text x="992" y="485" font-family="Liberation Serif" font-size="9.5" fill="#d040e0" text-anchor="end" >B7</text>
<path d="M694.9,533.5 L694.9,574.5" fill="none" stroke="#222" stroke-width="1.1" opacity="1"/>
<path d="M689.9,523.5 L694.9,533.5 L699.9,523.5" fill="none" stroke="#222" stroke-width="1.1" opacity="1"/>
<path d="M694.9,523.5 L694.9,533.5" fill="none" stroke="#222" stroke-width="1.1" opacity="1"/>
<path d="M694.9,574.5 L701.7,574.5" fill="none" stroke="#4a4a4a" stroke-width="0.9" opacity="1"/>
<circle cx="707.7" cy="574.5" r="6" fill="#e4e6f4" stroke="#b8bcd0" stroke-width="0.8"/>
<path d="M713.7,574.5 L729.4,574.5" fill="none" stroke="#4a4a4a" stroke-width="0.9" opacity="1"/>
<rect x="729.4" y="534.9" width="23.200000000000045" height="79.20000000000005" fill="#c6f3c6" stroke="#111" stroke-width="1.6"/>
<path d="M745.6,541.4 L752.6,541.4" fill="none" stroke="#333" stroke-width="0.8" opacity="1"/>
<circle cx="752.6" cy="541.4" r="1.2" fill="#fff" stroke="#333" stroke-width="0.6"/>
<path d="M745.6,546.6 L752.6,546.6" fill="none" stroke="#333" stroke-width="0.8" opacity="1"/>
<circle cx="752.6" cy="546.6" r="1.2" fill="#fff" stroke="#333" stroke-width="0.6"/>
<path d="M745.6,555.2 L752.6,555.2" fill="none" stroke="#333" stroke-width="0.8" opacity="1"/>
<circle cx="752.6" cy="555.2" r="1.2" fill="#fff" stroke="#333" stroke-width="0.6"/>
<path d="M745.6,561.7 L752.6,561.7" fill="none" stroke="#333" stroke-width="0.8" opacity="1"/>
<circle cx="752.6" cy="561.7" r="1.2" fill="#fff" stroke="#333" stroke-width="0.6"/>
<path d="M745.6,569.4 L752.6,569.4" fill="none" stroke="#333" stroke-width="0.8" opacity="1"/>
<circle cx="752.6" cy="569.4" r="1.2" fill="#fff" stroke="#333" stroke-width="0.6"/>
<path d="M745.6,576.8 L752.6,576.8" fill="none" stroke="#333" stroke-width="0.8" opacity="1"/>
<circle cx="752.6" cy="576.8" r="1.2" fill="#fff" stroke="#333" stroke-width="0.6"/>
<path d="M745.6,585 L752.6,585" fill="none" stroke="#333" stroke-width="0.8" opacity="1"/>
<circle cx="752.6" cy="585" r="1.2" fill="#fff" stroke="#333" stroke-width="0.6"/>
<path d="M745.6,592 L752.6,592" fill="none" stroke="#333" stroke-width="0.8" opacity="1"/>
<circle cx="752.6" cy="592" r="1.2" fill="#fff" stroke="#333" stroke-width="0.6"/>
<path d="M745.6,600.1 L752.6,600.1" fill="none" stroke="#333" stroke-width="0.8" opacity="1"/>
<circle cx="752.6" cy="600.1" r="1.2" fill="#fff" stroke="#333" stroke-width="0.6"/>
<path d="M745.6,607.5 L752.6,607.5" fill="none" stroke="#333" stroke-width="0.8" opacity="1"/>
<circle cx="752.6" cy="607.5" r="1.2" fill="#fff" stroke="#333" stroke-width="0.6"/>
<path d="M732,574.5 L738,574.5 L744,567" fill="none" stroke="#333" stroke-width="0.8" opacity="1"/>
<rect x="803.2" y="515.8" width="9.299999999999955" height="9.799999999999955" fill="#b8601c" stroke="#6a3a10" stroke-width="0.7"/>
<path d="M805.0,519.1999999999999 q1.4,-1.6 2.8,0 t2.8,0 M805.0,522.1999999999999 q1.4,-1.6 2.8,0 t2.8,0 M807.85,517.3 V524.0999999999999" fill="none" stroke="#2a1606" stroke-width="0.8"/>
<rect x="803.2" y="525.6" width="9.299999999999955" height="9.799999999999955" fill="#b8601c" stroke="#6a3a10" stroke-width="0.7"/>
<path d="M805.0,529.0 q1.4,-1.6 2.8,0 t2.8,0 M805.0,532.0 q1.4,-1.6 2.8,0 t2.8,0 M807.85,527.1 V533.9" fill="none" stroke="#2a1606" stroke-width="0.8"/>
<rect x="803.2" y="535.6" width="9.299999999999955" height="9.799999999999955" fill="#b8601c" stroke="#6a3a10" stroke-width="0.7"/>
<path d="M805.0,539.0 q1.4,-1.6 2.8,0 t2.8,0 M805.0,542.0 q1.4,-1.6 2.8,0 t2.8,0 M807.85,537.1 V543.9" fill="none" stroke="#2a1606" stroke-width="0.8"/>
<rect x="803.2" y="545.6" width="9.299999999999955" height="9.799999999999955" fill="#b8601c" stroke="#6a3a10" stroke-width="0.7"/>
<path d="M805.0,549.0 q1.4,-1.6 2.8,0 t2.8,0 M805.0,552.0 q1.4,-1.6 2.8,0 t2.8,0 M807.85,547.1 V553.9" fill="none" stroke="#2a1606" stroke-width="0.8"/>
<text x="802" y="522" font-family="Liberation Serif" font-size="9.5" fill="#8a2a2a" text-anchor="end" >B8</text>
<text x="802" y="532" font-family="Liberation Serif" font-size="9.5" fill="#8a2a2a" text-anchor="end" >B5</text>
<text x="801" y="540" font-family="Liberation Serif" font-size="6" fill="#8a2a2a" text-anchor="end" >B20/B28A</text>
<text x="803" y="550" font-family="Liberation Serif" font-size="9.5" fill="#8a2a2a" text-anchor="end" >B28B</text>
<rect x="782.7" y="560" width="9.5" height="9.799999999999955" fill="#b8601c" stroke="#6a3a10" stroke-width="0.7"/>
<path d="M784.5,563.4 q1.4,-1.6 2.8,0 t2.8,0 M784.5,566.4 q1.4,-1.6 2.8,0 t2.8,0 M787.45,561.5 V568.3" fill="none" stroke="#2a1606" stroke-width="0.8"/>
<rect x="782.7" y="570" width="9.5" height="9.799999999999955" fill="#b8601c" stroke="#6a3a10" stroke-width="0.7"/>
<path d="M784.5,573.4 q1.4,-1.6 2.8,0 t2.8,0 M784.5,576.4 q1.4,-1.6 2.8,0 t2.8,0 M787.45,571.5 V578.3" fill="none" stroke="#2a1606" stroke-width="0.8"/>
<rect x="782.7" y="600.5" width="9.5" height="9.799999999999955" fill="#b8601c" stroke="#6a3a10" stroke-width="0.7"/>
<path d="M784.5,603.9 q1.4,-1.6 2.8,0 t2.8,0 M784.5,606.9 q1.4,-1.6 2.8,0 t2.8,0 M787.45,602.0 V608.8" fill="none" stroke="#2a1606" stroke-width="0.8"/>
<rect x="782.7" y="611.3" width="9.5" height="9.799999999999955" fill="#b8601c" stroke="#6a3a10" stroke-width="0.7"/>
<path d="M784.5,614.6999999999999 q1.4,-1.6 2.8,0 t2.8,0 M784.5,617.6999999999999 q1.4,-1.6 2.8,0 t2.8,0 M787.45,612.8 V619.5999999999999" fill="none" stroke="#2a1606" stroke-width="0.8"/>
<rect x="782.7" y="626.9" width="9.5" height="9.799999999999955" fill="#b8601c" stroke="#6a3a10" stroke-width="0.7"/>
<path d="M784.5,630.3 q1.4,-1.6 2.8,0 t2.8,0 M784.5,633.3 q1.4,-1.6 2.8,0 t2.8,0 M787.45,628.4 V635.1999999999999" fill="none" stroke="#2a1606" stroke-width="0.8"/>
<rect x="782.7" y="639.2" width="9.5" height="9.799999999999955" fill="#b8601c" stroke="#6a3a10" stroke-width="0.7"/>
<path d="M784.5,642.6 q1.4,-1.6 2.8,0 t2.8,0 M784.5,645.6 q1.4,-1.6 2.8,0 t2.8,0 M787.45,640.7 V647.5" fill="none" stroke="#2a1606" stroke-width="0.8"/>
<rect x="782.7" y="581.5" width="9.5" height="9.5" fill="#c8c8c8" stroke="#777" stroke-width="0.8"/>
<path d="M784.5,585.25 q1.5,-2 3,0 t3,0 M784.5,588.25 q1.5,-2 3,0 t3,0 M787.45,583.0 V589.5" fill="none" stroke="#3a2a3a" stroke-width="0.75"/>
<rect x="782.7" y="591" width="9.5" height="9.5" fill="#c8c8c8" stroke="#777" stroke-width="0.8"/>
<path d="M784.5,594.75 q1.5,-2 3,0 t3,0 M784.5,597.75 q1.5,-2 3,0 t3,0 M787.45,592.5 V599.0" fill="none" stroke="#3a2a3a" stroke-width="0.75"/>
<text x="774" y="572" font-family="Liberation Serif" font-size="9" fill="#8a2a2a" text-anchor="end" >B1</text>
<text x="774" y="579" font-family="Liberation Serif" font-size="9" fill="#8a2a2a" text-anchor="end" >B2</text>
<text x="782" y="586" font-family="Liberation Serif" font-size="6" fill="#888" text-anchor="end" >B34+B39</text>
<rect x="805.5" y="569.8" width="12.100000000000023" height="9.300000000000068" fill="#cfe6f0" stroke="#5a8aa0" stroke-width="0.9"/>
<path d="M808.0,571.8 L812.55,576.6 L816.1,576.6" fill="none" stroke="#334" stroke-width="0.8"/>
<path d="M752.6,541.4 L765,541.4 L765,519.8 L803.2,519.8" fill="none" stroke="#a85563" stroke-width="0.9" opacity="1"/>
<path d="M752.6,546.6 L771,546.6 L771,530 L803.2,530" fill="none" stroke="#a85563" stroke-width="0.9" opacity="1"/>
<path d="M752.6,555.2 L775,555.2 L775,541 L803.2,541" fill="none" stroke="#a85563" stroke-width="0.9" opacity="1"/>
<path d="M752.6,561.7 L779,561.7 L779,551 L803.2,551" fill="none" stroke="#a85563" stroke-width="0.9" opacity="1"/>
<path d="M752.6,569.4 L776,569.4 L776,565 L782.7,565" fill="none" stroke="#a85563" stroke-width="0.9" opacity="1"/>
<path d="M752.6,576.8 L776,576.8 L776,575 L782.7,575" fill="none" stroke="#a85563" stroke-width="0.9" opacity="1"/>
<path d="M752.6,585 L782.7,585" fill="none" stroke="#999" stroke-width="0.8" opacity="1"/>
<path d="M752.6,600.1 L770,600.1 L770,605.5 L782.7,605.5" fill="none" stroke="#a85563" stroke-width="0.9" opacity="1"/>
<path d="M752.6,607.5 L766,607.5 L766,616 L782.7,616" fill="none" stroke="#a85563" stroke-width="0.9" opacity="1"/>
<path d="M812.5,519.8 L910.3,519.8 L910.3,508.9 L1011,508.9" fill="none" stroke="#a85563" stroke-width="1" opacity="1"/>
<path d="M812.5,530.2 L913.1,530.2 L913.1,520.1 L1011,520.1" fill="none" stroke="#a85563" stroke-width="1" opacity="1"/>
<path d="M812.5,540 L915.6,540 L915.6,531.7 L1011,531.7" fill="none" stroke="#a85563" stroke-width="1" opacity="1"/>
<path d="M812.5,550.3 L917.4,550.3 L917.4,543.2 L1011,543.2" fill="none" stroke="#a85563" stroke-width="1" opacity="1"/>
<path d="M792.2,565 L798,565 L798,574.5 L805.5,574.5" fill="none" stroke="#a85563" stroke-width="0.9" opacity="1"/>
<path d="M792.2,575 L805.5,575" fill="none" stroke="#a85563" stroke-width="0.9" opacity="1"/>
<path d="M817.6,574.9 L825.6,574.9 L825.6,559.2 L927.5,559.2 L927.5,553.6 L1011,553.6" fill="none" stroke="#a85563" stroke-width="1" opacity="1"/>
<path d="M792.2,594 L834,594 L834,565.5 L1011,565.5" fill="none" stroke="#6a8090" stroke-width="0.9" opacity="1"/>
<path d="M792.2,605.2 L837.4,605.2 L837.4,576.7 L1011,576.7" fill="none" stroke="#a85563" stroke-width="1" opacity="1"/>
<path d="M792.2,616.4 L843,616.4 L843,588.5 L1011,588.5" fill="none" stroke="#8a3a48" stroke-width="1" opacity="1"/>
<path d="M792.2,631.5 L894,631.5 L894,596.5 L1011,596.5" fill="none" stroke="#a85563" stroke-width="1" opacity="1"/>
<path d="M792.2,644 L905,644 L905,610 L1011,610" fill="none" stroke="#a85563" stroke-width="1" opacity="1"/>
<text x="992" y="510" font-family="Liberation Serif" font-size="9.5" fill="#8a2a2a" text-anchor="end" >B8</text>
<text x="993" y="521" font-family="Liberation Serif" font-size="9.5" fill="#8a2a2a" text-anchor="end" >B5</text>
<text x="1004" y="531" font-family="Liberation Serif" font-size="9.5" fill="#8a2a2a" text-anchor="end" >B20/B28A</text>
<text x="995" y="542" font-family="Liberation Serif" font-size="9.5" fill="#8a2a2a" text-anchor="end" >B28B</text>
<text x="1010" y="552" font-family="Liberation Serif" font-size="9.5" fill="#8a2a2a" text-anchor="end" >B1+B2+B34+B39</text>
<text x="993" y="564" font-family="Liberation Serif" font-size="9.5" fill="#8aa0b0" text-anchor="end" >B39</text>
<text x="990" y="576" font-family="Liberation Serif" font-size="9.5" fill="#8a2a2a" text-anchor="end" >B3</text>
<text x="991" y="587" font-family="Liberation Serif" font-size="9.5" fill="#8a2a2a" text-anchor="end" >B40</text>
<text x="1000" y="597" font-family="Liberation Serif" font-size="9.5" fill="#8a2a2a" text-anchor="end" >B38/B41</text>
<text x="989" y="609" font-family="Liberation Serif" font-size="9.5" fill="#8a2a2a" text-anchor="end" >B7</text>
<path d="M690.3,633 L690.3,671.1" fill="none" stroke="#222" stroke-width="1.1" opacity="1"/>
<path d="M685.3,623 L690.3,633 L695.3,623" fill="none" stroke="#222" stroke-width="1.1" opacity="1"/>
<path d="M690.3,623 L690.3,633" fill="none" stroke="#222" stroke-width="1.1" opacity="1"/>
<path d="M690.3,671.1 L701.7,671.1" fill="none" stroke="#4a4a4a" stroke-width="0.9" opacity="1"/>
<circle cx="707.7" cy="671.1" r="6" fill="#e4e6f4" stroke="#b8bcd0" stroke-width="0.8"/>
<path d="M708.4,665 L708.4,640.4 L730,640.4" fill="none" stroke="#4a4a4a" stroke-width="0.9" opacity="1"/>
<path d="M730,638 L736,638 L733,643 Z M756,638 L762,638 L759,643 Z" fill="#f4d0d0" stroke="#a05050" stroke-width="0.6"/>
<path d="M733,643 L733,649 L759,649 L759,643" fill="none" stroke="#a85563" stroke-width="0.8" opacity="1"/>
<rect x="737.5" y="633.4" width="12.100000000000023" height="8.600000000000023" fill="#cfe6f0" stroke="#5a8aa0" stroke-width="0.9"/>
<path d="M740,639.5 L744,639.5 L747.5,635.5" fill="none" stroke="#334" stroke-width="0.8"/>
<path d="M749.6,635.5 L771,635.5 L771,631.5 L782.7,631.5" fill="none" stroke="#a85563" stroke-width="0.8" opacity="1"/>
<path d="M762,640.4 L771.6,640.4 L771.6,643.5 L782.7,643.5" fill="none" stroke="#a85563" stroke-width="0.8" opacity="1"/>
<path d="M713.7,671.1 L724,671.1" fill="none" stroke="#4a4a4a" stroke-width="0.9" opacity="1"/>
<rect x="724" y="665.7" width="16.299999999999955" height="11.199999999999932" fill="#f4b183" stroke="#111" stroke-width="1.4"/>
<path d="M727,668 L737,674 M727,674 L737,668" stroke="#333" stroke-width="0.8"/>
<path d="M740.3,671.1 L763.6,671.1" fill="none" stroke="#6a8a9a" stroke-width="0.9" opacity="1"/>
<rect x="763.6" y="666.4" width="9.299999999999955" height="8.600000000000023" fill="#e890c8" stroke="#a05080" stroke-width="0.8"/>
<path d="M765.4,669.7 q1.5,-2 3,0 t3,0 M765.4,672.7 q1.5,-2 3,0 t3,0 M768.25,667.9 V673.5" fill="none" stroke="#3a2a3a" stroke-width="0.75"/>
<path d="M772.9,671.1 L782.7,671.1" fill="none" stroke="#4a4a4a" stroke-width="0.9" opacity="1"/>
<rect x="782.7" y="664" width="23.299999999999955" height="13.600000000000023" fill="#f5f000" stroke="#111" stroke-width="1.4"/>
<text x="794.3" y="674" font-family="Liberation Sans" font-size="7" fill="#333" text-anchor="middle" >LNA</text>
<path d="M806,671.1 L814.3,671.1" fill="none" stroke="#4a4a4a" stroke-width="0.9" opacity="1"/>
<rect x="814.3" y="661.3" width="17.300000000000068" height="16.700000000000045" fill="#f4a0d8" stroke="#b06090" stroke-width="0.8"/>
<path d="M817,666 q3,-3 6,0 t6,0 M817,670 q3,-3 6,0 t6,0 M817,674 q3,-3 6,0 t6,0" fill="none" stroke="#602040" stroke-width="0.8"/>
<path d="M831.6,665.3 L916,665.3 L916,639.6 L1011,639.6" fill="none" stroke="#4a4a4a" stroke-width="1" opacity="1"/>
<path d="M831.6,676.2 L928,676.2 L928,647.2 L1011,647.2" fill="none" stroke="#4a4a4a" stroke-width="1" opacity="1"/>
<rect x="1011.4" y="243.4" width="120" height="419.5" fill="#eed6c0" stroke="#6a4a38" stroke-width="1"/>
<rect x="1014.4" y="247" width="120" height="121.4" fill="#faf1e8" stroke="#6a4a38" stroke-width="1"/>
<rect x="1014.4" y="372.8" width="120" height="286" fill="#faf1e8" stroke="#6a4a38" stroke-width="1"/>
<path d="M1011,257 L1050,257" fill="none" stroke="#463c34" stroke-width="0.8" opacity="1"/>
<ellipse cx="1011.3" cy="257" rx="1.6" ry="2.2" fill="#fff" stroke="#555" stroke-width="0.6"/>
<text x="1016.5" y="255.2" font-family="Liberation Sans" font-size="3.9" fill="#2a2420" text-anchor="start" font-weight="bold">TX_HB1_OUT</text>
<path d="M1044.3,254.2 L1048,256.7" fill="none" stroke="#222" stroke-width="1.1" opacity="1"/>
<path d="M1011,266.7 L1050,266.7" fill="none" stroke="#463c34" stroke-width="0.8" opacity="1"/>
<ellipse cx="1011.3" cy="266.7" rx="1.6" ry="2.2" fill="#fff" stroke="#555" stroke-width="0.6"/>
<text x="1016.5" y="264.9" font-family="Liberation Sans" font-size="3.9" fill="#2a2420" text-anchor="start" font-weight="bold">TX_HB2_OUT</text>
<path d="M1044.3,263.9 L1048,266.4" fill="none" stroke="#222" stroke-width="1.1" opacity="1"/>
<path d="M1011,276.1 L1050,276.1" fill="none" stroke="#463c34" stroke-width="0.8" opacity="1"/>
<ellipse cx="1011.3" cy="276.1" rx="1.6" ry="2.2" fill="#fff" stroke="#555" stroke-width="0.6"/>
<text x="1016.5" y="274.3" font-family="Liberation Sans" font-size="3.9" fill="#2a2420" text-anchor="start" font-weight="bold">TX_MB1_OUT</text>
<path d="M1044.3,273.3 L1048,275.8" fill="none" stroke="#222" stroke-width="1.1" opacity="1"/>
<path d="M1011,285.7 L1050,285.7" fill="none" stroke="#463c34" stroke-width="0.8" opacity="1"/>
<ellipse cx="1011.3" cy="285.7" rx="1.6" ry="2.2" fill="#fff" stroke="#555" stroke-width="0.6"/>
<text x="1016.5" y="283.9" font-family="Liberation Sans" font-size="3.9" fill="#2a2420" text-anchor="start" font-weight="bold">TX_MB2_OUT</text>
<path d="M1044.3,282.9 L1048,285.4" fill="none" stroke="#222" stroke-width="1.1" opacity="1"/>
<path d="M1011,294.5 L1050,294.5" fill="none" stroke="#463c34" stroke-width="0.8" opacity="1"/>
<ellipse cx="1011.3" cy="294.5" rx="1.6" ry="2.2" fill="#fff" stroke="#555" stroke-width="0.6"/>
<text x="1016.5" y="292.7" font-family="Liberation Sans" font-size="3.9" fill="#2a2420" text-anchor="start" font-weight="bold">TX_MB3_OUT</text>
<path d="M1044.3,291.7 L1048,294.2" fill="none" stroke="#222" stroke-width="1.1" opacity="1"/>
<path d="M1011,303.8 L1050,303.8" fill="none" stroke="#463c34" stroke-width="0.8" opacity="1"/>
<ellipse cx="1011.3" cy="303.8" rx="1.6" ry="2.2" fill="#fff" stroke="#555" stroke-width="0.6"/>
<text x="1016.5" y="302.0" font-family="Liberation Sans" font-size="3.9" fill="#2a2420" text-anchor="start" font-weight="bold">TX_MB4_OUT</text>
<path d="M1044.3,301.0 L1048,303.5" fill="none" stroke="#222" stroke-width="1.1" opacity="1"/>
<path d="M1011,313.4 L1050,313.4" fill="none" stroke="#463c34" stroke-width="0.8" opacity="1"/>
<ellipse cx="1011.3" cy="313.4" rx="1.6" ry="2.2" fill="#fff" stroke="#555" stroke-width="0.6"/>
<text x="1016.5" y="311.59999999999997" font-family="Liberation Sans" font-size="3.9" fill="#2a2420" text-anchor="start" font-weight="bold">TX_LB1_OUT</text>
<path d="M1044.3,310.59999999999997 L1048,313.09999999999997" fill="none" stroke="#222" stroke-width="1.1" opacity="1"/>
<path d="M1011,322.5 L1050,322.5" fill="none" stroke="#463c34" stroke-width="0.8" opacity="1"/>
<ellipse cx="1011.3" cy="322.5" rx="1.6" ry="2.2" fill="#fff" stroke="#555" stroke-width="0.6"/>
<text x="1016.5" y="320.7" font-family="Liberation Sans" font-size="3.9" fill="#2a2420" text-anchor="start" font-weight="bold">TX_LB2_OUT</text>
<path d="M1044.3,319.7 L1048,322.2" fill="none" stroke="#222" stroke-width="1.1" opacity="1"/>
<path d="M1011,333 L1050,333" fill="none" stroke="#463c34" stroke-width="0.8" opacity="1"/>
<ellipse cx="1011.3" cy="333" rx="1.6" ry="2.2" fill="#fff" stroke="#555" stroke-width="0.6"/>
<text x="1016.5" y="331.2" font-family="Liberation Sans" font-size="3.9" fill="#2a2420" text-anchor="start" font-weight="bold">TX_LB3_OUT</text>
<path d="M1044.3,330.2 L1048,332.7" fill="none" stroke="#222" stroke-width="1.1" opacity="1"/>
<path d="M1011,342.7 L1050,342.7" fill="none" stroke="#463c34" stroke-width="0.8" opacity="1"/>
<ellipse cx="1011.3" cy="342.7" rx="1.6" ry="2.2" fill="#fff" stroke="#555" stroke-width="0.6"/>
<text x="1016.5" y="340.9" font-family="Liberation Sans" font-size="3.9" fill="#2a2420" text-anchor="start" font-weight="bold">TX_LB4_OUT</text>
<path d="M1044.3,339.9 L1048,342.4" fill="none" stroke="#222" stroke-width="1.1" opacity="1"/>
<path d="M1050,253 L1053.7,253 L1053.7,266.7" fill="none" stroke="#463c34" stroke-width="0.8" opacity="1"/>
<path d="M1050,257 L1053.7,257" fill="none" stroke="#463c34" stroke-width="0.8" opacity="1"/>
<path d="M1050,266.7 L1053.7,266.7" fill="none" stroke="#463c34" stroke-width="0.8" opacity="1"/>
<path d="M1050,272.1 L1053.7,272.1 L1053.7,303.8" fill="none" stroke="#463c34" stroke-width="0.8" opacity="1"/>
<path d="M1050,276.1 L1053.7,276.1" fill="none" stroke="#463c34" stroke-width="0.8" opacity="1"/>
<path d="M1050,285.7 L1053.7,285.7" fill="none" stroke="#463c34" stroke-width="0.8" opacity="1"/>
<path d="M1050,294.5 L1053.7,294.5" fill="none" stroke="#463c34" stroke-width="0.8" opacity="1"/>
<path d="M1050,303.8 L1053.7,303.8" fill="none" stroke="#463c34" stroke-width="0.8" opacity="1"/>
<path d="M1050,309.4 L1053.7,309.4 L1053.7,342.7" fill="none" stroke="#463c34" stroke-width="0.8" opacity="1"/>
<path d="M1050,313.4 L1053.7,313.4" fill="none" stroke="#463c34" stroke-width="0.8" opacity="1"/>
<path d="M1050,322.5 L1053.7,322.5" fill="none" stroke="#463c34" stroke-width="0.8" opacity="1"/>
<path d="M1050,333 L1053.7,333" fill="none" stroke="#463c34" stroke-width="0.8" opacity="1"/>
<path d="M1050,342.7 L1053.7,342.7" fill="none" stroke="#463c34" stroke-width="0.8" opacity="1"/>
<path d="M1064,266.5 L1073,259 L1073,274 Z M1059,294.5 L1068,287 L1068,302 Z M1059,322.5 L1068,315 L1068,330 Z" fill="none" stroke="#555" stroke-width="0.8"/>
<path d="M1053.7,266.5 L1064,266.5" fill="none" stroke="#463c34" stroke-width="0.8" opacity="1"/>
<path d="M1053.7,294.5 L1059,294.5" fill="none" stroke="#463c34" stroke-width="0.8" opacity="1"/>
<path d="M1053.7,322.5 L1059,322.5" fill="none" stroke="#463c34" stroke-width="0.8" opacity="1"/>
<path d="M1073,266.5 L1077.5,266.5" fill="none" stroke="#463c34" stroke-width="0.8" opacity="1"/>
<path d="M1068,294.5 L1072,294.5 L1072,322.5 L1077.5,322.5" fill="none" stroke="#463c34" stroke-width="0.8" opacity="1"/>
<path d="M1068,322.5 L1072,322.5" fill="none" stroke="#463c34" stroke-width="0.8" opacity="1"/>
<rect x="1077.5" y="254.7" width="47.5" height="23.400000000000034" fill="none" stroke="#4a4a4a" stroke-width="1.1"/>
<rect x="1077.5" y="312" width="47.5" height="23.600000000000023" fill="none" stroke="#4a4a4a" stroke-width="1.1"/>
<text x="1084" y="267" font-family="Liberation Sans" font-size="5" fill="#3a3a3a" text-anchor="start" font-weight="bold">HB quadrature</text>
<text x="1086" y="275" font-family="Liberation Sans" font-size="5" fill="#3a3a3a" text-anchor="start" font-weight="bold">upconverter</text>
<text x="1081" y="324" font-family="Liberation Sans" font-size="5" fill="#3a3a3a" text-anchor="start" font-weight="bold">LMB quadrature</text>
<text x="1086" y="332" font-family="Liberation Sans" font-size="5" fill="#3a3a3a" text-anchor="start" font-weight="bold">upconverter</text>
<path d="M1098,278.1 L1098,286" fill="none" stroke="#666" stroke-width="0.7" opacity="1"/>
<path d="M1098,304 L1098,312" fill="none" stroke="#666" stroke-width="0.7" opacity="1"/>
<text x="1092" y="289" font-family="Liberation Sans" font-size="3.5" fill="#d03030" text-anchor="start" >tx_hb_lo</text>
<text x="1091" y="303" font-family="Liberation Sans" font-size="3.5" fill="#d03030" text-anchor="start" >tx_lmb_lo</text>
<rect x="1064.3" y="338.6" width="35.5" height="11.399999999999977" fill="none" stroke="#4a4a4a" stroke-width="1.1"/>
<rect x="1064.3" y="353" width="35.5" height="12" fill="none" stroke="#4a4a4a" stroke-width="1.1"/>
<text x="1082" y="347" font-family="Liberation Sans" font-size="6" fill="#333" text-anchor="middle" font-weight="bold">PWR DET</text>
<text x="1082" y="361.5" font-family="Liberation Sans" font-size="5.5" fill="#333" text-anchor="middle" font-weight="bold">Feedback Rx</text>
<path d="M1011,359 L1059,359 L1059,344 L1064.3,344" fill="none" stroke="#463c34" stroke-width="0.8" opacity="1"/>
<path d="M1059,359 L1064.3,359" fill="none" stroke="#463c34" stroke-width="0.8" opacity="1"/>
<path d="M1099.8,344 L1125,344" fill="none" stroke="#463c34" stroke-width="0.8" opacity="1"/>
<text x="1017" y="357" font-family="Liberation Sans" font-size="3.8" fill="#333" text-anchor="start" >PDET_RFFB</text>
<ellipse cx="1011.3" cy="359" rx="1.6" ry="2.2" fill="#fff" stroke="#555" stroke-width="0.6"/>
<path d="M1113,478 A19,19 0 1,0 1112,510" fill="none" stroke="#d6cdc4" stroke-width="6"/>
<path d="M1098,457 L1114,471" fill="none" stroke="#d6cdc4" stroke-width="6"/>
<path d="M1011,383.7 L1044.2,383.7" fill="none" stroke="#463c34" stroke-width="0.85" opacity="1"/>
<ellipse cx="1011.3" cy="383.7" rx="1.6" ry="2.2" fill="#fff" stroke="#555" stroke-width="0.6"/>
<text x="1016.5" y="381.5" font-family="Liberation Sans" font-size="4" fill="#2a2420" text-anchor="start" font-weight="bold">PRX_LB1_IN</text>
<path d="M1044.2,376.2 L1052.2,383.7 L1044.2,391.2 Z" fill="none" stroke="#6a6058" stroke-width="0.8"/>
<text x="1046.5" y="385.2" font-family="Liberation Sans" font-size="3" fill="#555" text-anchor="start" >LNA</text>
<path d="M1052.2,383.7 L1064.5,383.7" fill="none" stroke="#5a5048" stroke-width="0.8" opacity="1"/>
<path d="M1064.5,380.7 L1064.5,386.7" fill="none" stroke="#5a5048" stroke-width="0.8" opacity="1"/>
<path d="M1065,380.7 L1070,377.2 M1065,386.7 L1070,383.2" stroke="#222" stroke-width="1.1"/>
<path d="M1068,380.7 L1078.1,380.7" fill="none" stroke="#5a5048" stroke-width="0.7" opacity="1"/>
<path d="M1068,386.7 L1074.6,386.7" fill="none" stroke="#5a5048" stroke-width="0.7" opacity="1"/>
<path d="M1011,395.0 L1053.6,395.0" fill="none" stroke="#463c34" stroke-width="0.85" opacity="1"/>
<ellipse cx="1011.3" cy="395.0" rx="1.6" ry="2.2" fill="#fff" stroke="#555" stroke-width="0.6"/>
<text x="1016.5" y="392.8" font-family="Liberation Sans" font-size="4" fill="#2a2420" text-anchor="start" font-weight="bold">PRX_LB2_IN</text>
<path d="M1053.6,387.5 L1061.6,395.0 L1053.6,402.5 Z" fill="none" stroke="#6a6058" stroke-width="0.8"/>
<text x="1055.8999999999999" y="396.5" font-family="Liberation Sans" font-size="3" fill="#555" text-anchor="start" >LNA</text>
<path d="M1061.6,395.0 L1064.5,395.0" fill="none" stroke="#5a5048" stroke-width="0.8" opacity="1"/>
<path d="M1064.5,392.0 L1064.5,398.0" fill="none" stroke="#5a5048" stroke-width="0.8" opacity="1"/>
<path d="M1065,392.0 L1070,388.5 M1065,398.0 L1070,394.5" stroke="#222" stroke-width="1.1"/>
<path d="M1068,392.0 L1078.1,392.0" fill="none" stroke="#5a5048" stroke-width="0.7" opacity="1"/>
<path d="M1068,398.0 L1074.6,398.0" fill="none" stroke="#5a5048" stroke-width="0.7" opacity="1"/>
<path d="M1011,406.3 L1044.2,406.3" fill="none" stroke="#463c34" stroke-width="0.85" opacity="1"/>
<ellipse cx="1011.3" cy="406.3" rx="1.6" ry="2.2" fill="#fff" stroke="#555" stroke-width="0.6"/>
<text x="1016.5" y="404.1" font-family="Liberation Sans" font-size="4" fill="#2a2420" text-anchor="start" font-weight="bold">PRX_LB3_IN</text>
<path d="M1044.2,398.8 L1052.2,406.3 L1044.2,413.8 Z" fill="none" stroke="#6a6058" stroke-width="0.8"/>
<text x="1046.5" y="407.8" font-family="Liberation Sans" font-size="3" fill="#555" text-anchor="start" >LNA</text>
<path d="M1052.2,406.3 L1064.5,406.3" fill="none" stroke="#5a5048" stroke-width="0.8" opacity="1"/>
<path d="M1064.5,403.3 L1064.5,409.3" fill="none" stroke="#5a5048" stroke-width="0.8" opacity="1"/>
<path d="M1065,403.3 L1070,399.8 M1065,409.3 L1070,405.8" stroke="#222" stroke-width="1.1"/>
<path d="M1068,403.3 L1078.1,403.3" fill="none" stroke="#5a5048" stroke-width="0.7" opacity="1"/>
<path d="M1068,409.3 L1074.6,409.3" fill="none" stroke="#5a5048" stroke-width="0.7" opacity="1"/>
<path d="M1011,417.6 L1053.6,417.6" fill="none" stroke="#463c34" stroke-width="0.85" opacity="1"/>
<ellipse cx="1011.3" cy="417.6" rx="1.6" ry="2.2" fill="#fff" stroke="#555" stroke-width="0.6"/>
<text x="1016.5" y="415.40000000000003" font-family="Liberation Sans" font-size="4" fill="#2a2420" text-anchor="start" font-weight="bold">PRX_LB4_IN</text>
<path d="M1053.6,410.1 L1061.6,417.6 L1053.6,425.1 Z" fill="none" stroke="#6a6058" stroke-width="0.8"/>
<text x="1055.8999999999999" y="419.1" font-family="Liberation Sans" font-size="3" fill="#555" text-anchor="start" >LNA</text>
<path d="M1061.6,417.6 L1064.5,417.6" fill="none" stroke="#5a5048" stroke-width="0.8" opacity="1"/>
<path d="M1064.5,414.6 L1064.5,420.6" fill="none" stroke="#5a5048" stroke-width="0.8" opacity="1"/>
<path d="M1065,414.6 L1070,411.1 M1065,420.6 L1070,417.1" stroke="#222" stroke-width="1.1"/>
<path d="M1068,414.6 L1078.1,414.6" fill="none" stroke="#5a5048" stroke-width="0.7" opacity="1"/>
<path d="M1068,420.6 L1074.6,420.6" fill="none" stroke="#5a5048" stroke-width="0.7" opacity="1"/>
<path d="M1011,428.9 L1044.2,428.9" fill="none" stroke="#463c34" stroke-width="0.85" opacity="1"/>
<ellipse cx="1011.3" cy="428.9" rx="1.6" ry="2.2" fill="#fff" stroke="#555" stroke-width="0.6"/>
<text x="1016.5" y="426.7" font-family="Liberation Sans" font-size="4" fill="#2a2420" text-anchor="start" font-weight="bold">PRX_MB1_IN</text>
<path d="M1044.2,421.4 L1052.2,428.9 L1044.2,436.4 Z" fill="none" stroke="#6a6058" stroke-width="0.8"/>
<text x="1046.5" y="430.4" font-family="Liberation Sans" font-size="3" fill="#555" text-anchor="start" >LNA</text>
<path d="M1052.2,428.9 L1064.5,428.9" fill="none" stroke="#5a5048" stroke-width="0.8" opacity="1"/>
<path d="M1065,428.9 L1070,425.4" stroke="#222" stroke-width="1.1"/>
<path d="M1069,428.9 L1078.1,428.9" fill="none" stroke="#5a5048" stroke-width="0.7" opacity="1"/>
<path d="M1011,440.2 L1053.6,440.2" fill="none" stroke="#463c34" stroke-width="0.85" opacity="1"/>
<ellipse cx="1011.3" cy="440.2" rx="1.6" ry="2.2" fill="#fff" stroke="#555" stroke-width="0.6"/>
<text x="1016.5" y="438.0" font-family="Liberation Sans" font-size="4" fill="#2a2420" text-anchor="start" font-weight="bold">PRX_MB2_IN</text>
<path d="M1053.6,432.7 L1061.6,440.2 L1053.6,447.7 Z" fill="none" stroke="#6a6058" stroke-width="0.8"/>
<text x="1055.8999999999999" y="441.7" font-family="Liberation Sans" font-size="3" fill="#555" text-anchor="start" >LNA</text>
<path d="M1061.6,440.2 L1064.5,440.2" fill="none" stroke="#5a5048" stroke-width="0.8" opacity="1"/>
<path d="M1065,440.2 L1070,436.7" stroke="#222" stroke-width="1.1"/>
<path d="M1069,440.2 L1078.1,440.2" fill="none" stroke="#5a5048" stroke-width="0.7" opacity="1"/>
<path d="M1011,451.5 L1044.2,451.5" fill="none" stroke="#463c34" stroke-width="0.85" opacity="1"/>
<ellipse cx="1011.3" cy="451.5" rx="1.6" ry="2.2" fill="#fff" stroke="#555" stroke-width="0.6"/>
<text x="1016.5" y="449.3" font-family="Liberation Sans" font-size="4" fill="#2a2420" text-anchor="start" font-weight="bold">PRX_MB3_IN</text>
<path d="M1044.2,444.0 L1052.2,451.5 L1044.2,459.0 Z" fill="none" stroke="#6a6058" stroke-width="0.8"/>
<text x="1046.5" y="453.0" font-family="Liberation Sans" font-size="3" fill="#555" text-anchor="start" >LNA</text>
<path d="M1052.2,451.5 L1064.5,451.5" fill="none" stroke="#5a5048" stroke-width="0.8" opacity="1"/>
<path d="M1065,451.5 L1070,448.0" stroke="#222" stroke-width="1.1"/>
<path d="M1069,451.5 L1078.1,451.5" fill="none" stroke="#5a5048" stroke-width="0.7" opacity="1"/>
<path d="M1011,462.8 L1053.6,462.8" fill="none" stroke="#463c34" stroke-width="0.85" opacity="1"/>
<ellipse cx="1011.3" cy="462.8" rx="1.6" ry="2.2" fill="#fff" stroke="#555" stroke-width="0.6"/>
<text x="1016.5" y="460.6" font-family="Liberation Sans" font-size="4" fill="#2a2420" text-anchor="start" font-weight="bold">PRX_MHB4_IN</text>
<path d="M1053.6,455.3 L1061.6,462.8 L1053.6,470.3 Z" fill="none" stroke="#6a6058" stroke-width="0.8"/>
<text x="1055.8999999999999" y="464.3" font-family="Liberation Sans" font-size="3" fill="#555" text-anchor="start" >LNA</text>
<path d="M1061.6,462.8 L1064.5,462.8" fill="none" stroke="#5a5048" stroke-width="0.8" opacity="1"/>
<path d="M1064.5,459.8 L1064.5,465.8" fill="none" stroke="#5a5048" stroke-width="0.8" opacity="1"/>
<path d="M1065,459.8 L1070,456.3 M1065,465.8 L1070,462.3" stroke="#222" stroke-width="1.1"/>
<path d="M1068,459.8 L1078.1,459.8" fill="none" stroke="#5a5048" stroke-width="0.7" opacity="1"/>
<path d="M1068,465.8 L1074.6,465.8" fill="none" stroke="#5a5048" stroke-width="0.7" opacity="1"/>
<path d="M1011,474.1 L1044.2,474.1" fill="none" stroke="#463c34" stroke-width="0.85" opacity="1"/>
<ellipse cx="1011.3" cy="474.1" rx="1.6" ry="2.2" fill="#fff" stroke="#555" stroke-width="0.6"/>
<text x="1016.5" y="471.90000000000003" font-family="Liberation Sans" font-size="4" fill="#2a2420" text-anchor="start" font-weight="bold">PRX_HB1_IN</text>
<path d="M1044.2,466.6 L1052.2,474.1 L1044.2,481.6 Z" fill="none" stroke="#6a6058" stroke-width="0.8"/>
<text x="1046.5" y="475.6" font-family="Liberation Sans" font-size="3" fill="#555" text-anchor="start" >LNA</text>
<path d="M1052.2,474.1 L1064.5,474.1" fill="none" stroke="#5a5048" stroke-width="0.8" opacity="1"/>
<path d="M1065,474.1 L1070,470.6" stroke="#222" stroke-width="1.1"/>
<path d="M1069,474.1 L1078.1,474.1" fill="none" stroke="#5a5048" stroke-width="0.7" opacity="1"/>
<path d="M1011,485.4 L1053.6,485.4" fill="none" stroke="#463c34" stroke-width="0.85" opacity="1"/>
<ellipse cx="1011.3" cy="485.4" rx="1.6" ry="2.2" fill="#fff" stroke="#555" stroke-width="0.6"/>
<text x="1016.5" y="483.2" font-family="Liberation Sans" font-size="4" fill="#2a2420" text-anchor="start" font-weight="bold">PRX_HB3_IN</text>
<path d="M1053.6,477.9 L1061.6,485.4 L1053.6,492.9 Z" fill="none" stroke="#6a6058" stroke-width="0.8"/>
<text x="1055.8999999999999" y="486.9" font-family="Liberation Sans" font-size="3" fill="#555" text-anchor="start" >LNA</text>
<path d="M1061.6,485.4 L1064.5,485.4" fill="none" stroke="#5a5048" stroke-width="0.8" opacity="1"/>
<path d="M1064.5,482.4 L1064.5,488.4" fill="none" stroke="#5a5048" stroke-width="0.8" opacity="1"/>
<path d="M1065,482.4 L1070,478.9 M1065,488.4 L1070,484.9" stroke="#222" stroke-width="1.1"/>
<path d="M1068,482.4 L1078.1,482.4" fill="none" stroke="#5a5048" stroke-width="0.7" opacity="1"/>
<path d="M1068,488.4 L1074.6,488.4" fill="none" stroke="#5a5048" stroke-width="0.7" opacity="1"/>
<path d="M1011,496.7 L1044.2,496.7" fill="none" stroke="#463c34" stroke-width="0.85" opacity="1"/>
<ellipse cx="1011.3" cy="496.7" rx="1.6" ry="2.2" fill="#fff" stroke="#555" stroke-width="0.6"/>
<text x="1016.5" y="494.5" font-family="Liberation Sans" font-size="4" fill="#2a2420" text-anchor="start" font-weight="bold">PRX_HB2_IN</text>
<path d="M1044.2,489.2 L1052.2,496.7 L1044.2,504.2 Z" fill="none" stroke="#6a6058" stroke-width="0.8"/>
<text x="1046.5" y="498.2" font-family="Liberation Sans" font-size="3" fill="#555" text-anchor="start" >LNA</text>
<path d="M1052.2,496.7 L1064.5,496.7" fill="none" stroke="#5a5048" stroke-width="0.8" opacity="1"/>
<path d="M1064.5,493.7 L1064.5,499.7" fill="none" stroke="#5a5048" stroke-width="0.8" opacity="1"/>
<path d="M1065,493.7 L1070,490.2 M1065,499.7 L1070,496.2" stroke="#222" stroke-width="1.1"/>
<path d="M1068,493.7 L1078.1,493.7" fill="none" stroke="#5a5048" stroke-width="0.7" opacity="1"/>
<path d="M1068,499.7 L1074.6,499.7" fill="none" stroke="#5a5048" stroke-width="0.7" opacity="1"/>
<path d="M1011,508.0 L1053.6,508.0" fill="none" stroke="#463c34" stroke-width="0.85" opacity="1"/>
<ellipse cx="1011.3" cy="508.0" rx="1.6" ry="2.2" fill="#fff" stroke="#555" stroke-width="0.6"/>
<text x="1016.5" y="505.8" font-family="Liberation Sans" font-size="4" fill="#2a2420" text-anchor="start" font-weight="bold">DRX_LB1_IN</text>
<path d="M1053.6,500.5 L1061.6,508.0 L1053.6,515.5 Z" fill="none" stroke="#6a6058" stroke-width="0.8"/>
<text x="1055.8999999999999" y="509.5" font-family="Liberation Sans" font-size="3" fill="#555" text-anchor="start" >LNA</text>
<path d="M1061.6,508.0 L1064.5,508.0" fill="none" stroke="#5a5048" stroke-width="0.8" opacity="1"/>
<path d="M1064.5,505.0 L1064.5,511.0" fill="none" stroke="#5a5048" stroke-width="0.8" opacity="1"/>
<path d="M1065,505.0 L1070,501.5 M1065,511.0 L1070,507.5" stroke="#222" stroke-width="1.1"/>
<path d="M1068,505.0 L1078.1,505.0" fill="none" stroke="#5a5048" stroke-width="0.7" opacity="1"/>
<path d="M1068,511.0 L1074.6,511.0" fill="none" stroke="#5a5048" stroke-width="0.7" opacity="1"/>
<path d="M1011,519.3 L1044.2,519.3" fill="none" stroke="#463c34" stroke-width="0.85" opacity="1"/>
<ellipse cx="1011.3" cy="519.3" rx="1.6" ry="2.2" fill="#fff" stroke="#555" stroke-width="0.6"/>
<text x="1016.5" y="517.0999999999999" font-family="Liberation Sans" font-size="4" fill="#2a2420" text-anchor="start" font-weight="bold">DRX_LB2_IN</text>
<path d="M1044.2,511.79999999999995 L1052.2,519.3 L1044.2,526.8 Z" fill="none" stroke="#6a6058" stroke-width="0.8"/>
<text x="1046.5" y="520.8" font-family="Liberation Sans" font-size="3" fill="#555" text-anchor="start" >LNA</text>
<path d="M1052.2,519.3 L1064.5,519.3" fill="none" stroke="#5a5048" stroke-width="0.8" opacity="1"/>
<path d="M1064.5,516.3 L1064.5,522.3" fill="none" stroke="#5a5048" stroke-width="0.8" opacity="1"/>
<path d="M1065,516.3 L1070,512.8 M1065,522.3 L1070,518.8" stroke="#222" stroke-width="1.1"/>
<path d="M1068,516.3 L1078.1,516.3" fill="none" stroke="#5a5048" stroke-width="0.7" opacity="1"/>
<path d="M1068,522.3 L1074.6,522.3" fill="none" stroke="#5a5048" stroke-width="0.7" opacity="1"/>
<path d="M1011,530.6 L1053.6,530.6" fill="none" stroke="#463c34" stroke-width="0.85" opacity="1"/>
<ellipse cx="1011.3" cy="530.6" rx="1.6" ry="2.2" fill="#fff" stroke="#555" stroke-width="0.6"/>
<text x="1016.5" y="528.4" font-family="Liberation Sans" font-size="4" fill="#2a2420" text-anchor="start" font-weight="bold">DRX_LB3_IN</text>
<path d="M1053.6,523.1 L1061.6,530.6 L1053.6,538.1 Z" fill="none" stroke="#6a6058" stroke-width="0.8"/>
<text x="1055.8999999999999" y="532.1" font-family="Liberation Sans" font-size="3" fill="#555" text-anchor="start" >LNA</text>
<path d="M1061.6,530.6 L1064.5,530.6" fill="none" stroke="#5a5048" stroke-width="0.8" opacity="1"/>
<path d="M1064.5,527.6 L1064.5,533.6" fill="none" stroke="#5a5048" stroke-width="0.8" opacity="1"/>
<path d="M1065,527.6 L1070,524.1 M1065,533.6 L1070,530.1" stroke="#222" stroke-width="1.1"/>
<path d="M1068,527.6 L1078.1,527.6" fill="none" stroke="#5a5048" stroke-width="0.7" opacity="1"/>
<path d="M1068,533.6 L1074.6,533.6" fill="none" stroke="#5a5048" stroke-width="0.7" opacity="1"/>
<path d="M1011,541.9 L1044.2,541.9" fill="none" stroke="#463c34" stroke-width="0.85" opacity="1"/>
<ellipse cx="1011.3" cy="541.9" rx="1.6" ry="2.2" fill="#fff" stroke="#555" stroke-width="0.6"/>
<text x="1016.5" y="539.6999999999999" font-family="Liberation Sans" font-size="4" fill="#2a2420" text-anchor="start" font-weight="bold">DRX_LB4_IN</text>
<path d="M1044.2,534.4 L1052.2,541.9 L1044.2,549.4 Z" fill="none" stroke="#6a6058" stroke-width="0.8"/>
<text x="1046.5" y="543.4" font-family="Liberation Sans" font-size="3" fill="#555" text-anchor="start" >LNA</text>
<path d="M1052.2,541.9 L1064.5,541.9" fill="none" stroke="#5a5048" stroke-width="0.8" opacity="1"/>
<path d="M1064.5,538.9 L1064.5,544.9" fill="none" stroke="#5a5048" stroke-width="0.8" opacity="1"/>
<path d="M1065,538.9 L1070,535.4 M1065,544.9 L1070,541.4" stroke="#222" stroke-width="1.1"/>
<path d="M1068,538.9 L1078.1,538.9" fill="none" stroke="#5a5048" stroke-width="0.7" opacity="1"/>
<path d="M1068,544.9 L1074.6,544.9" fill="none" stroke="#5a5048" stroke-width="0.7" opacity="1"/>
<path d="M1011,553.2 L1053.6,553.2" fill="none" stroke="#463c34" stroke-width="0.85" opacity="1"/>
<ellipse cx="1011.3" cy="553.2" rx="1.6" ry="2.2" fill="#fff" stroke="#555" stroke-width="0.6"/>
<text x="1016.5" y="551.0" font-family="Liberation Sans" font-size="4" fill="#2a2420" text-anchor="start" font-weight="bold">DRX_MB1_IN</text>
<path d="M1053.6,545.7 L1061.6,553.2 L1053.6,560.7 Z" fill="none" stroke="#6a6058" stroke-width="0.8"/>
<text x="1055.8999999999999" y="554.7" font-family="Liberation Sans" font-size="3" fill="#555" text-anchor="start" >LNA</text>
<path d="M1061.6,553.2 L1064.5,553.2" fill="none" stroke="#5a5048" stroke-width="0.8" opacity="1"/>
<path d="M1065,553.2 L1070,549.7" stroke="#222" stroke-width="1.1"/>
<path d="M1069,553.2 L1078.1,553.2" fill="none" stroke="#5a5048" stroke-width="0.7" opacity="1"/>
<path d="M1011,564.5 L1044.2,564.5" fill="none" stroke="#463c34" stroke-width="0.85" opacity="1"/>
<ellipse cx="1011.3" cy="564.5" rx="1.6" ry="2.2" fill="#fff" stroke="#555" stroke-width="0.6"/>
<text x="1016.5" y="562.3" font-family="Liberation Sans" font-size="4" fill="#2a2420" text-anchor="start" font-weight="bold">DRX_MB2_IN</text>
<path d="M1044.2,557.0 L1052.2,564.5 L1044.2,572.0 Z" fill="none" stroke="#6a6058" stroke-width="0.8"/>
<text x="1046.5" y="566.0" font-family="Liberation Sans" font-size="3" fill="#555" text-anchor="start" >LNA</text>
<path d="M1052.2,564.5 L1064.5,564.5" fill="none" stroke="#5a5048" stroke-width="0.8" opacity="1"/>
<path d="M1065,564.5 L1070,561.0" stroke="#222" stroke-width="1.1"/>
<path d="M1069,564.5 L1078.1,564.5" fill="none" stroke="#5a5048" stroke-width="0.7" opacity="1"/>
<path d="M1011,575.8 L1053.6,575.8" fill="none" stroke="#463c34" stroke-width="0.85" opacity="1"/>
<ellipse cx="1011.3" cy="575.8" rx="1.6" ry="2.2" fill="#fff" stroke="#555" stroke-width="0.6"/>
<text x="1016.5" y="573.5999999999999" font-family="Liberation Sans" font-size="4" fill="#2a2420" text-anchor="start" font-weight="bold">DRX_MB3_IN</text>
<path d="M1053.6,568.3 L1061.6,575.8 L1053.6,583.3 Z" fill="none" stroke="#6a6058" stroke-width="0.8"/>
<text x="1055.8999999999999" y="577.3" font-family="Liberation Sans" font-size="3" fill="#555" text-anchor="start" >LNA</text>
<path d="M1061.6,575.8 L1064.5,575.8" fill="none" stroke="#5a5048" stroke-width="0.8" opacity="1"/>
<path d="M1065,575.8 L1070,572.3" stroke="#222" stroke-width="1.1"/>
<path d="M1069,575.8 L1078.1,575.8" fill="none" stroke="#5a5048" stroke-width="0.7" opacity="1"/>
<path d="M1011,587.1 L1044.2,587.1" fill="none" stroke="#463c34" stroke-width="0.85" opacity="1"/>
<ellipse cx="1011.3" cy="587.1" rx="1.6" ry="2.2" fill="#fff" stroke="#555" stroke-width="0.6"/>
<text x="1016.5" y="584.9" font-family="Liberation Sans" font-size="4" fill="#2a2420" text-anchor="start" font-weight="bold">DRX_MHB4_IN</text>
<path d="M1044.2,579.6 L1052.2,587.1 L1044.2,594.6 Z" fill="none" stroke="#6a6058" stroke-width="0.8"/>
<text x="1046.5" y="588.6" font-family="Liberation Sans" font-size="3" fill="#555" text-anchor="start" >LNA</text>
<path d="M1052.2,587.1 L1064.5,587.1" fill="none" stroke="#5a5048" stroke-width="0.8" opacity="1"/>
<path d="M1064.5,584.1 L1064.5,590.1" fill="none" stroke="#5a5048" stroke-width="0.8" opacity="1"/>
<path d="M1065,584.1 L1070,580.6 M1065,590.1 L1070,586.6" stroke="#222" stroke-width="1.1"/>
<path d="M1068,584.1 L1078.1,584.1" fill="none" stroke="#5a5048" stroke-width="0.7" opacity="1"/>
<path d="M1068,590.1 L1074.6,590.1" fill="none" stroke="#5a5048" stroke-width="0.7" opacity="1"/>
<path d="M1011,598.4 L1053.6,598.4" fill="none" stroke="#463c34" stroke-width="0.85" opacity="1"/>
<ellipse cx="1011.3" cy="598.4" rx="1.6" ry="2.2" fill="#fff" stroke="#555" stroke-width="0.6"/>
<text x="1016.5" y="596.1999999999999" font-family="Liberation Sans" font-size="4" fill="#2a2420" text-anchor="start" font-weight="bold">DRX_HB1_IN</text>
<path d="M1053.6,590.9 L1061.6,598.4 L1053.6,605.9 Z" fill="none" stroke="#6a6058" stroke-width="0.8"/>
<text x="1055.8999999999999" y="599.9" font-family="Liberation Sans" font-size="3" fill="#555" text-anchor="start" >LNA</text>
<path d="M1061.6,598.4 L1064.5,598.4" fill="none" stroke="#5a5048" stroke-width="0.8" opacity="1"/>
<path d="M1065,598.4 L1070,594.9" stroke="#222" stroke-width="1.1"/>
<path d="M1069,598.4 L1078.1,598.4" fill="none" stroke="#5a5048" stroke-width="0.7" opacity="1"/>
<path d="M1011,609.7 L1044.2,609.7" fill="none" stroke="#463c34" stroke-width="0.85" opacity="1"/>
<ellipse cx="1011.3" cy="609.7" rx="1.6" ry="2.2" fill="#fff" stroke="#555" stroke-width="0.6"/>
<text x="1016.5" y="607.5" font-family="Liberation Sans" font-size="4" fill="#2a2420" text-anchor="start" font-weight="bold">DRX_HB3_IN</text>
<path d="M1044.2,602.2 L1052.2,609.7 L1044.2,617.2 Z" fill="none" stroke="#6a6058" stroke-width="0.8"/>
<text x="1046.5" y="611.2" font-family="Liberation Sans" font-size="3" fill="#555" text-anchor="start" >LNA</text>
<path d="M1052.2,609.7 L1064.5,609.7" fill="none" stroke="#5a5048" stroke-width="0.8" opacity="1"/>
<path d="M1064.5,606.7 L1064.5,612.7" fill="none" stroke="#5a5048" stroke-width="0.8" opacity="1"/>
<path d="M1065,606.7 L1070,603.2 M1065,612.7 L1070,609.2" stroke="#222" stroke-width="1.1"/>
<path d="M1068,606.7 L1078.1,606.7" fill="none" stroke="#5a5048" stroke-width="0.7" opacity="1"/>
<path d="M1068,612.7 L1074.6,612.7" fill="none" stroke="#5a5048" stroke-width="0.7" opacity="1"/>
<path d="M1011,621.0 L1053.6,621.0" fill="none" stroke="#463c34" stroke-width="0.85" opacity="1"/>
<ellipse cx="1011.3" cy="621.0" rx="1.6" ry="2.2" fill="#fff" stroke="#555" stroke-width="0.6"/>
<text x="1016.5" y="618.8" font-family="Liberation Sans" font-size="4" fill="#2a2420" text-anchor="start" font-weight="bold">DRX_HB2_IN</text>
<path d="M1053.6,613.5 L1061.6,621.0 L1053.6,628.5 Z" fill="none" stroke="#6a6058" stroke-width="0.8"/>
<text x="1055.8999999999999" y="622.5" font-family="Liberation Sans" font-size="3" fill="#555" text-anchor="start" >LNA</text>
<path d="M1061.6,621.0 L1064.5,621.0" fill="none" stroke="#5a5048" stroke-width="0.8" opacity="1"/>
<path d="M1064.5,618.0 L1064.5,624.0" fill="none" stroke="#5a5048" stroke-width="0.8" opacity="1"/>
<path d="M1065,618.0 L1070,614.5 M1065,624.0 L1070,620.5" stroke="#222" stroke-width="1.1"/>
<path d="M1068,618.0 L1078.1,618.0" fill="none" stroke="#5a5048" stroke-width="0.7" opacity="1"/>
<path d="M1068,624.0 L1074.6,624.0" fill="none" stroke="#5a5048" stroke-width="0.7" opacity="1"/>
<path d="M1078.1,380 L1078.1,624" fill="none" stroke="#5a5048" stroke-width="0.8" opacity="1"/>
<path d="M1074.6,386 L1074.6,420" fill="none" stroke="#5a5048" stroke-width="0.7" opacity="1"/>
<path d="M1074.6,510 L1074.6,545" fill="none" stroke="#5a5048" stroke-width="0.7" opacity="1"/>
<rect x="1081" y="402.3" width="11" height="15.5" fill="#e8e4e0" stroke="#666" stroke-width="1.1"/>
<path d="M1083,404.3 H1090 L1088.0,410.05 L1090,415.8 H1083 L1085.0,410.05 Z" fill="#999" stroke="#555" stroke-width="0.5"/>
<rect x="1081" y="492.4" width="11" height="15.5" fill="#e8e4e0" stroke="#666" stroke-width="1.1"/>
<path d="M1083,494.4 H1090 L1088.0,500.15 L1090,505.9 H1083 L1085.0,500.15 Z" fill="#999" stroke="#555" stroke-width="0.5"/>
<rect x="1081" y="526.4" width="11" height="15.5" fill="#e8e4e0" stroke="#666" stroke-width="1.1"/>
<path d="M1083,528.4 H1090 L1088.0,534.15 L1090,539.9 H1083 L1085.0,534.15 Z" fill="#999" stroke="#555" stroke-width="0.5"/>
<text x="1088" y="454.5" font-family="Liberation Sans" font-size="5.8" fill="#333" text-anchor="start" font-weight="bold">RF Receiver</text>
<path d="M1092,409 L1125,409" fill="none" stroke="#555" stroke-width="0.8" opacity="1"/>
<path d="M1078,395.5 L1125,395.5" fill="none" stroke="#555" stroke-width="0.8" opacity="1"/>
<path d="M1078,429 L1125,429" fill="none" stroke="#555" stroke-width="0.8" opacity="1"/>
<path d="M1078,474 L1125,474" fill="none" stroke="#555" stroke-width="0.8" opacity="1"/>
<path d="M1078,553.7 L1125,553.7" fill="none" stroke="#555" stroke-width="0.8" opacity="1"/>
<path d="M1092,500 L1125,500" fill="none" stroke="#555" stroke-width="0.8" opacity="1"/>
<path d="M1078,515.8 L1125,515.8" fill="none" stroke="#555" stroke-width="0.8" opacity="1"/>
<path d="M1092,533.2 L1112,533.2" fill="none" stroke="#555" stroke-width="0.8" opacity="1"/>
<path d="M1078,589 L1125,589" fill="none" stroke="#555" stroke-width="0.8" opacity="1"/>
<path d="M1112,553 L1112,663" fill="none" stroke="#555" stroke-width="0.8" opacity="1"/>
<path d="M1104,600 L1104,663" fill="none" stroke="#555" stroke-width="0.8" opacity="1"/>
<path d="M1104,596 L1099,607 L1109,607 Z" fill="none" stroke="#555" stroke-width="0.8"/>
<rect x="1081" y="616.5" width="11" height="14.5" fill="#e8e4e0" stroke="#666" stroke-width="1.1"/>
<path d="M1083,618.5 H1090 L1088.0,623.75 L1090,629 H1083 L1085.0,623.75 Z" fill="#999" stroke="#555" stroke-width="0.5"/>
<path d="M1092,623 L1096,623 L1096,663" fill="none" stroke="#555" stroke-width="0.8" opacity="1"/>
<ellipse cx="1011.3" cy="639.6" rx="1.6" ry="2.2" fill="#fff" stroke="#555" stroke-width="0.6"/>
<path d="M1011,639.6 L1044,639.6" fill="none" stroke="#555" stroke-width="0.8" opacity="1"/>
<text x="1017" y="637.6" font-family="Liberation Sans" font-size="4" fill="#333" text-anchor="start" >GNSS_RF_INP</text>
<ellipse cx="1011.3" cy="647.2" rx="1.6" ry="2.2" fill="#fff" stroke="#555" stroke-width="0.6"/>
<path d="M1011,647.2 L1044,647.2" fill="none" stroke="#555" stroke-width="0.8" opacity="1"/>
<text x="1017" y="645.2" font-family="Liberation Sans" font-size="4" fill="#333" text-anchor="start" >GNSS_RF_INM</text>
<path d="M1053,635 L1062,642 L1053,649 Z" fill="none" stroke="#555" stroke-width="0.8"/>
<text x="1068" y="640" font-family="Liberation Sans" font-size="3.5" fill="#d03030" text-anchor="start" >gnss</text>
<rect x="1094" y="660" width="4" height="6" fill="#fff" stroke="#555" stroke-width="0.6"/>
<rect x="1102" y="660" width="4" height="6" fill="#fff" stroke="#555" stroke-width="0.6"/>
<rect x="1110" y="660" width="4" height="6" fill="#fff" stroke="#555" stroke-width="0.6"/>
<text x="1090" y="655" font-family="Liberation Sans" font-size="4" fill="#333" transform="rotate(-90 1090 655)">DRX_HB_CA_OUT</text>
<text x="1100" y="655" font-family="Liberation Sans" font-size="4" fill="#333" transform="rotate(-90 1100 655)">DRX_MB_CA_IN</text>
<text x="1109" y="655" font-family="Liberation Sans" font-size="4" fill="#333" transform="rotate(-90 1109 655)">DRX_LB_CA_OUT</text></g></svg>
<!-- right scrollbar -->
<div class="a" style="left:1505px;top:161px;width:16px;height:673px;background:#fff;border-left:1px solid #e4e4e4"></div>
<div class="a" style="left:1506px;top:444px;width:14px;height:376px;background:#dcdcdc;border-top:1px solid #a8a8a8;border-bottom:1px solid #a8a8a8"></div>
<svg class="a" style="left:1505px;top:161px" width="16" height="673" viewBox="0 0 16 673"><path d="M4.5,12 L8.5,8 L12.5,12" stroke="#555" stroke-width="1.4" fill="none"/><path d="M4.5,663 L8.5,667 L12.5,663" stroke="#555" stroke-width="1.4" fill="none"/><path d="M5,468 H12 M5,471 H12 M5,474 H12" stroke="#666" stroke-width="1"/><path d="M0.5,656 H16" stroke="#ccc"/></svg>
<div class="a" style="left:1520px;top:31px;width:1px;height:828px;background:#63c8ea"></div>
<!-- status bar -->
<div class="a" style="left:0;top:834px;width:1521px;height:3px;background:#eef3f8"></div>
<div class="a" style="left:0;top:836px;width:1521px;height:20px;background:#43668a;border-top:2px solid #3b5c76;border-bottom:1px solid #3a6480"></div>
<div class="a" style="left:0;top:856px;width:1521px;height:3px;background:#6cc2dc"></div>
<div class="a sm" style="left:0;top:842px;color:#0a0e1a">Version:1.0.0.52</div>
<div class="a sm" style="left:1195px;top:842px;color:#fff">Current [XT1072_XT1077_XT1078_XT1079_L3_Block_Diagram]</div>
</body></html>
